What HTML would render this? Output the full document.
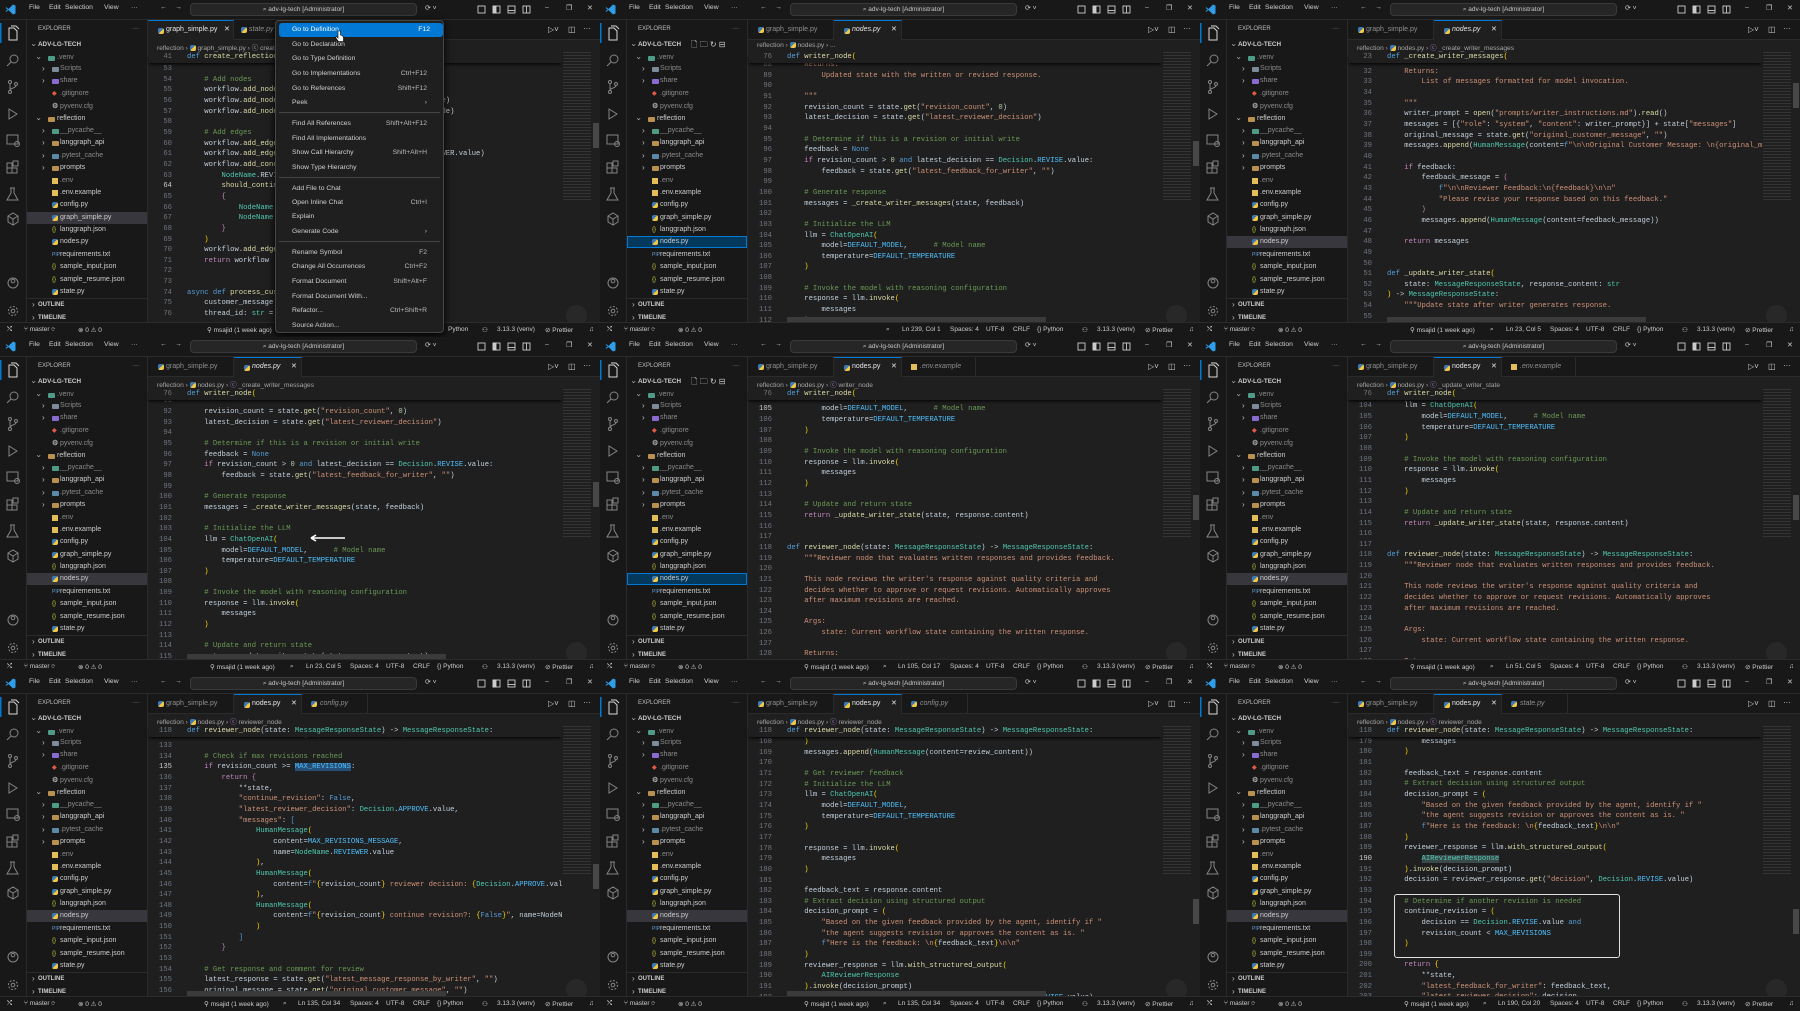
<!DOCTYPE html>
<html><head><meta charset="utf-8"><style>
*{box-sizing:border-box}
body{margin:0;width:1800px;height:1011px;background:#111;overflow:hidden;font-family:"Liberation Sans",sans-serif;color:#ccc}
.p{position:absolute;width:600px;height:337px;overflow:hidden;background:#1f1f1f}
.a{position:absolute;white-space:nowrap}
.tb{position:absolute;left:0;top:0;width:600px;height:20px;background:#181818;border-bottom:1px solid #2b2b2b}
.mn{position:absolute;top:4px;font-size:6.8px;color:#cfcfcf}
.srch{position:absolute;left:190px;top:3px;width:227px;height:13px;background:#262626;border:1px solid #3a3a3a;border-radius:4px;font-size:6.5px;color:#c8c8c8;text-align:center;line-height:11px}
.ab{position:absolute;left:0;top:20px;width:27px;height:302px;background:#181818;border-right:1px solid #2b2b2b}
.sb{position:absolute;left:27px;top:20px;width:121px;height:302px;background:#181818;border-right:1px solid #2b2b2b}
.r{position:absolute;left:0;width:120px;height:12px;line-height:12px;font-size:7px;color:#cccccc;white-space:nowrap}
.r .cv{position:absolute;left:15px;top:0;font-size:8px;color:#bbb;font-weight:normal}
.r .dn{display:inline-block;transform:rotate(90deg)}
.r .ic{position:absolute;left:25px;top:3px}
.r .t{position:absolute;left:33px}
.r.z .cv{left:10px}.r.z .ic{left:21px}.r.z .t{left:30px}
.g{color:#8b8b8b}
.py{width:6px;height:6px;background:linear-gradient(135deg,#3d7ab3 50%,#f2c744 50%);border-radius:2px}
.fo{width:7px;height:5px;background:#b8904f;border-radius:1px;top:4px!important}
.fv{width:7px;height:5px;background:#4f9c86;border-radius:1px;top:4px!important}
.fs{width:7px;height:5px;background:#8a6bd0;border-radius:1px;top:4px!important}
.jn{font-size:6px;color:#cbcb41;top:0!important;font-style:normal}
.ev{width:6px;height:6px;background:#e3bd57}
.sel{background:#37373d}
.self{background:#04395e;outline:1px solid #0078d4;outline-offset:-1px}
.tabs{position:absolute;left:148px;top:20px;width:452px;height:20px;background:#181818;border-bottom:1px solid #2b2b2b}
.tab{position:absolute;top:0;height:20px;font-size:7px;line-height:20px;color:#8f8f8f;border-right:1px solid #2b2b2b}
.tab.on{background:#1f1f1f;color:#e6e6e6;border-top:1px solid #0078d4;line-height:18px}
.tab .py{position:absolute;top:7px}
.bc{position:absolute;left:157px;top:42px;font-size:6.6px;color:#a5a5a5}
.ed{position:absolute;left:148px;top:63px;width:414px;height:259px;overflow:hidden;font:7.2px/10.67px "Liberation Mono",monospace;color:#c3d0dc}
.in{position:absolute;left:0;width:100%}
.l{height:10.67px;white-space:pre;padding-left:39px;position:relative}
.l i{position:absolute;left:0;width:24px;text-align:right;font-style:normal;color:#6e7681}
.l i.cur{color:#cccccc}
.sk{position:absolute;left:148px;top:52px;width:414px;height:11px;background:#1f1f1f;font:7.2px/10.67px "Liberation Mono",monospace;color:#c3d0dc;box-shadow:0 2px 3px -1px #000}
.k{color:#569cd6}.c{color:#c586c0}.s{color:#ce9178}.m{color:#6a9955}.f{color:#dcdcaa}.t2{color:#4ec9b0}.v{color:#9cdcfe}.n{color:#4fc1ff}.y{color:#ffd700}.d{color:#b5cea8}
.hl{background:#264f78}
.mm{position:absolute;left:563px;top:52px;width:28px;height:150px;background:repeating-linear-gradient(#6a6a6a 0 1px,transparent 1px 3px);opacity:.28}
.vs{position:absolute;left:593px;width:6px;height:25px;background:#474747}
.hs{position:absolute;left:187px;top:317px;width:259px;height:5px;background:#3b3b3b}
.fb{position:absolute;left:566px;top:305px;width:21px;height:21px;border-radius:50%;background:#2a2a2a;opacity:.8}
.st{position:absolute;left:0;top:322px;width:600px;height:15px;background:#181818;border-top:1px solid #2b2b2b;font-size:6.5px;color:#cccccc}
.st .a{top:3px}
.menu{position:absolute;left:275px;top:20px;width:169px;height:313px;background:#1f1f1f;border:1px solid #454545;border-radius:4px;box-shadow:0 2px 8px #000;font-size:6.8px;color:#d0d0d0}
.mi{position:absolute;left:0;width:100%;height:14px;line-height:14px}
.mi span{position:absolute;left:16px}
.mi em{position:absolute;right:16px;font-style:normal;color:#bbb}
.sep{position:absolute;left:3px;right:3px;height:1px;background:#454545}
</style></head><body>

<!-- ============ PANEL 1 ============ -->
<div class="p" style="left:0;top:0">
<div class="tb">
<svg class="a" style="left:5px;top:4px" width="11" height="11" viewBox="0 0 11 11"><path d="M8 0.5L3.5 5 1.5 3.3 0.5 4 2.8 5.5 0.5 7 1.5 7.7 3.5 6 8 10.5 10.5 9.5V1.5z" fill="#2f9ee8"/></svg>
<span class="mn" style="left:29px">File</span><span class="mn" style="left:49px">Edit</span><span class="mn" style="left:65px">Selection</span><span class="mn" style="left:104px">View</span><span class="mn" style="left:131px">···</span>
<span class="mn" style="left:160px">←</span><span class="mn" style="left:175px">→</span>
<div class="srch">⌕ adv-lg-tech [Administrator]</div>
<span class="mn" style="left:425px">⟳ ˅</span>
<svg class="a" style="left:477px;top:5px" width="60" height="10" fill="none" stroke="#ccc" stroke-width=".9"><rect x="1" y="1" width="7" height="7"/><rect x="16" y="1" width="7" height="7"/><rect x="16" y="1" width="3" height="7" fill="#ccc"/><rect x="31" y="1" width="7" height="7"/><path d="M31 5.5h7"/><rect x="46" y="1" width="7" height="7"/><path d="M49.5 1v7"/></svg>
<span class="mn" style="left:545px">–</span><span class="mn" style="left:566px">❐</span><span class="mn" style="left:587px">✕</span>
</div>
<div class="ab"><svg width="26" height="302" fill="none" stroke="#858585" stroke-width="1"><rect x="0" y="3" width="1.5" height="20" fill="#0078d4" stroke="none"/><path d="M9 8h5l3 3v9h-8z M11 6h5l3 3" stroke="#d7d7d7"/><circle cx="14" cy="39" r="4"/><path d="M11 42l-4 4"/><circle cx="10" cy="62" r="1.5"/><circle cx="10" cy="72" r="1.5"/><circle cx="16" cy="64" r="1.5"/><path d="M10 63.5v7M16 65.5c0 3-6 2-6 5"/><path d="M9 89l8 5-8 5z"/><rect x="7" y="115" width="11" height="9"/><circle cx="17" cy="124" r="2.5"/><path d="M7 143h5v5h-5zM7 148h5v5h-5zM12 148h5v5h-5zM13 141h5v5h-5z"/><path d="M10 168h5M11 168v5l-4 7h11l-4-7v-5"/><path d="M8 196l5-3 5 3v6l-5 3-5-3zM8 196l5 3 5-3M13 199v6"/><circle cx="13" cy="263" r="5"/><circle cx="13" cy="261" r="1.8"/><circle cx="13" cy="291" r="4.5" stroke-dasharray="2 1.5"/><circle cx="13" cy="291" r="1.8"/></svg></div>
<div class="sb">
<div class="r" style="top:3px;font-size:6px;color:#bbb"><span style="position:absolute;left:11px">EXPLORER</span><span style="position:absolute;left:106px">···</span></div>
<div class="r" style="top:19px;font-weight:bold;font-size:6.3px"><b class="cv" style="left:5px"><span class="dn">›</span></b><span style="position:absolute;left:11px">ADV-LG-TECH</span></div>
<div class="r z" style="top:32px"><b class="cv"><span class="dn">›</span></b><u class="a ic fv"></u><span class="t g">.venv</span></div>
<div class="r" style="top:43px"><b class="cv">›</b><u class="a ic fo" style="background:#7d8a99"></u><span class="t g">Scripts</span></div>
<div class="r" style="top:55px"><b class="cv">›</b><u class="a ic fs"></u><span class="t g">share</span></div>
<div class="r" style="top:68px"><b class="a ic" style="color:#e05a45;font-size:6px;top:0">◆</b><span class="t g">.gitignore</span></div>
<div class="r" style="top:81px"><b class="a ic" style="color:#aaa;font-size:7px;top:0">⚙</b><span class="t g">pyvenv.cfg</span></div>
<div class="r z" style="top:93px"><b class="cv"><span class="dn">›</span></b><u class="a ic fo"></u><span class="t">reflection</span></div>
<div class="r" style="top:105px"><b class="cv">›</b><u class="a ic fv"></u><span class="t g">__pycache__</span></div>
<div class="r" style="top:117px"><b class="cv">›</b><u class="a ic fo"></u><span class="t">langgraph_api</span></div>
<div class="r" style="top:130px"><b class="cv">›</b><u class="a ic fo" style="background:#5c8aa6"></u><span class="t g">.pytest_cache</span></div>
<div class="r" style="top:142px"><b class="cv">›</b><u class="a ic fo"></u><span class="t">prompts</span></div>
<div class="r" style="top:155px"><u class="a ic ev"></u><span class="t g">.env</span></div>
<div class="r" style="top:167px"><u class="a ic ev"></u><span class="t">.env.example</span></div>
<div class="r" style="top:179px"><u class="a ic py"></u><span class="t">config.py</span></div>
<div class="r sel" style="top:192px"><u class="a ic py"></u><span class="t">graph_simple.py</span></div>
<div class="r" style="top:204px"><i class="a ic jn">{}</i><span class="t">langgraph.json</span></div>
<div class="r" style="top:216px"><u class="a ic py"></u><span class="t">nodes.py</span></div>
<div class="r" style="top:229px"><i class="a ic" style="font-size:5px;color:#6aa0d8;top:0;font-style:normal">PIP</i><span class="t">requirements.txt</span></div>
<div class="r" style="top:241px"><i class="a ic jn">{}</i><span class="t">sample_input.json</span></div>
<div class="r" style="top:254px"><i class="a ic jn">{}</i><span class="t">sample_resume.json</span></div>
<div class="r" style="top:266px"><u class="a ic py"></u><span class="t">state.py</span></div>
<div class="a" style="left:0;top:278px;width:120px;height:1px;background:#2b2b2b"></div>
<div class="r" style="top:279px;font-weight:bold;font-size:6px"><b class="cv" style="left:5px">›</b><span style="position:absolute;left:11px">OUTLINE</span></div>
<div class="r" style="top:292px;font-weight:bold;font-size:6px"><b class="cv" style="left:5px">›</b><span style="position:absolute;left:11px">TIMELINE</span></div>
</div>
<div class="tabs">
<div class="tab on" style="left:0;width:86px"><u class="py" style="left:10px"></u><span class="a" style="left:18px">graph_simple.py</span><span class="a" style="left:76px">✕</span></div>
<div class="tab" style="left:86px;width:60px"><u class="py" style="left:7px"></u><span class="a" style="left:15px;font-style:italic">state.py</span></div>
<span class="a" style="left:400px;top:5px;font-size:8px">▷˅</span><span class="a" style="left:420px;top:5px;font-size:8px">◫</span><span class="a" style="left:435px;top:4px;font-size:8px">···</span>
</div>
<div class="bc">reflection › <u class="py" style="display:inline-block;vertical-align:middle"></u> graph_simple.py › ⓒ create_reflection_workflow</div>
<div class="ed"><div class="in" style="top:1px">
<div class="l"><i>53</i></div>
<div class="l"><i>54</i>    <span class="m"># Add nodes</span></div>
<div class="l"><i>55</i>    workflow.<span class="f">add_node</span>(NodeName.WRITER.value, writer_node)</div>
<div class="l"><i>56</i>    workflow.<span class="f">add_node</span>(NodeName.REVIEWER.value, reviewer_node)</div>
<div class="l"><i>57</i>    workflow.<span class="f">add_node</span>(NodeName.HUMAN.value, human_review_node)</div>
<div class="l"><i>58</i></div>
<div class="l"><i>59</i>    <span class="m"># Add edges</span></div>
<div class="l"><i>60</i>    workflow.<span class="f">add_edge</span>(START, NodeName.WRITER.value)</div>
<div class="l"><i>61</i>    workflow.<span class="f">add_edge</span>(NodeName.WRITER.value, NodeName.REVIEWER.value)</div>
<div class="l"><i>62</i>    workflow.<span class="f">add_conditional_edges</span>(</div>
<div class="l"><i>63</i>        <span class="t2">NodeName</span>.REVIEWER.value,</div>
<div class="l"><i class="cur">64</i>        <span class="f">should_continue</span>,</div>
<div class="l"><i>65</i>        <span class="c">{</span></div>
<div class="l"><i>66</i>            <span class="t2">NodeName</span>.WRITER.value: NodeName.WRITER.value,</div>
<div class="l"><i>67</i>            <span class="t2">NodeName</span>.END.value: NodeName.END.value</div>
<div class="l"><i>68</i>        <span class="c">}</span></div>
<div class="l"><i>69</i>    <span class="y">)</span></div>
<div class="l"><i>70</i>    workflow.<span class="f">add_edge</span>(NodeName.HUMAN.value, END)</div>
<div class="l"><i>71</i>    <span class="c">return</span> workflow</div>
<div class="l"><i>72</i></div>
<div class="l"><i>73</i></div>
<div class="l"><i>74</i><span class="k">async def</span> <span class="f">process_customer_message</span>(</div>
<div class="l"><i>75</i>    customer_message: <span class="t2">str</span>,</div>
<div class="l"><i>76</i>    thread_id: <span class="t2">str</span> = <span class="k">None</span>,</div>
</div></div>
<div class="sk"><div class="l"><i>41</i><span class="k">def</span> <span class="f">create_reflection_workflow</span>() -&gt; <span class="t2">StateGraph</span>:</div></div>
<div class="mm"></div><div class="vs" style="top:123px"></div><div class="fb"></div>
<div class="st"><span class="a" style="left:7px">⤭</span><span class="a" style="left:24px">⑂ master ⟳</span><span class="a" style="left:78px">⊗ 0 ⚠ 0</span><span class="a" style="left:207px">⚲ msajid (1 week ago)</span><span class="a" style="left:448px">Python</span><span class="a" style="left:482px">⚇</span><span class="a" style="left:497px">3.13.3 (venv)</span><span class="a" style="left:545px">⊘ Prettier</span><span class="a" style="left:589px">♫</span></div>
<div class="menu">
<div class="mi" style="top:2px;left:3px;width:164px;background:#0078d4;border-radius:3px;color:#fff"><span style="left:13px">Go to Definition</span><em style="right:13px;color:#fff">F12</em></div>
<div class="mi" style="top:17px"><span>Go to Declaration</span></div>
<div class="mi" style="top:31px"><span>Go to Type Definition</span></div>
<div class="mi" style="top:46px"><span>Go to Implementations</span><em>Ctrl+F12</em></div>
<div class="mi" style="top:61px"><span>Go to References</span><em>Shift+F12</em></div>
<div class="mi" style="top:75px"><span>Peek</span><em>›</em></div>
<div class="sep" style="top:91px"></div>
<div class="mi" style="top:96px"><span>Find All References</span><em>Shift+Alt+F12</em></div>
<div class="mi" style="top:111px"><span>Find All Implementations</span></div>
<div class="mi" style="top:125px"><span>Show Call Hierarchy</span><em>Shift+Alt+H</em></div>
<div class="mi" style="top:140px"><span>Show Type Hierarchy</span></div>
<div class="sep" style="top:156px"></div>
<div class="mi" style="top:161px"><span>Add File to Chat</span></div>
<div class="mi" style="top:175px"><span>Open Inline Chat</span><em>Ctrl+I</em></div>
<div class="mi" style="top:189px"><span>Explain</span></div>
<div class="mi" style="top:204px"><span>Generate Code</span><em>›</em></div>
<div class="sep" style="top:220px"></div>
<div class="mi" style="top:225px"><span>Rename Symbol</span><em>F2</em></div>
<div class="mi" style="top:239px"><span>Change All Occurrences</span><em>Ctrl+F2</em></div>
<div class="mi" style="top:254px"><span>Format Document</span><em>Shift+Alt+F</em></div>
<div class="mi" style="top:269px"><span>Format Document With...</span></div>
<div class="mi" style="top:283px"><span>Refactor...</span><em>Ctrl+Shift+R</em></div>
<div class="mi" style="top:298px"><span>Source Action...</span></div>
</div>
<svg class="a" style="left:335px;top:30px" width="10" height="14"><path d="M3 1v7l-1.5-1.5-1 1 3 4h5v-4l-1-2-2-.5V1z" fill="#fff" stroke="#000" stroke-width=".6"/></svg>
</div>

<!-- ============ PANEL 2 ============ -->
<div class="p" style="left:600px;top:0">
<div class="tb">
<svg class="a" style="left:5px;top:4px" width="11" height="11" viewBox="0 0 11 11"><path d="M8 0.5L3.5 5 1.5 3.3 0.5 4 2.8 5.5 0.5 7 1.5 7.7 3.5 6 8 10.5 10.5 9.5V1.5z" fill="#2f9ee8"/></svg>
<span class="mn" style="left:29px">File</span><span class="mn" style="left:49px">Edit</span><span class="mn" style="left:65px">Selection</span><span class="mn" style="left:104px">View</span><span class="mn" style="left:131px">···</span>
<span class="mn" style="left:160px">←</span><span class="mn" style="left:175px">→</span>
<div class="srch">⌕ adv-lg-tech [Administrator]</div>
<span class="mn" style="left:425px">⟳ ˅</span>
<svg class="a" style="left:477px;top:5px" width="60" height="10" fill="none" stroke="#ccc" stroke-width=".9"><rect x="1" y="1" width="7" height="7"/><rect x="16" y="1" width="7" height="7"/><rect x="16" y="1" width="3" height="7" fill="#ccc"/><rect x="31" y="1" width="7" height="7"/><path d="M31 5.5h7"/><rect x="46" y="1" width="7" height="7"/><path d="M49.5 1v7"/></svg>
<span class="mn" style="left:545px">–</span><span class="mn" style="left:566px">❐</span><span class="mn" style="left:587px">✕</span>
</div>
<div class="ab"><svg width="26" height="302" fill="none" stroke="#858585" stroke-width="1"><rect x="0" y="3" width="1.5" height="20" fill="#0078d4" stroke="none"/><path d="M9 8h5l3 3v9h-8z M11 6h5l3 3" stroke="#d7d7d7"/><circle cx="14" cy="39" r="4"/><path d="M11 42l-4 4"/><circle cx="10" cy="62" r="1.5"/><circle cx="10" cy="72" r="1.5"/><circle cx="16" cy="64" r="1.5"/><path d="M10 63.5v7M16 65.5c0 3-6 2-6 5"/><path d="M9 89l8 5-8 5z"/><rect x="7" y="115" width="11" height="9"/><circle cx="17" cy="124" r="2.5"/><path d="M7 143h5v5h-5zM7 148h5v5h-5zM12 148h5v5h-5zM13 141h5v5h-5z"/><path d="M10 168h5M11 168v5l-4 7h11l-4-7v-5"/><path d="M8 196l5-3 5 3v6l-5 3-5-3zM8 196l5 3 5-3M13 199v6"/><circle cx="13" cy="263" r="5"/><circle cx="13" cy="261" r="1.8"/><circle cx="13" cy="291" r="4.5" stroke-dasharray="2 1.5"/><circle cx="13" cy="291" r="1.8"/></svg></div>
<div class="sb">
<div class="r" style="top:3px;font-size:6px;color:#bbb"><span style="position:absolute;left:11px">EXPLORER</span><span style="position:absolute;left:106px">···</span></div>
<div class="r" style="top:19px;font-weight:bold;font-size:6.3px"><b class="cv" style="left:5px"><span class="dn">›</span></b><span style="position:absolute;left:11px">ADV-LG-TECH</span><span style="position:absolute;left:64px;font-weight:normal;font-size:8px">🗋 🗀 ↻ ⊟</span></div>
<div class="r z" style="top:32px"><b class="cv"><span class="dn">›</span></b><u class="a ic fv"></u><span class="t g">.venv</span></div>
<div class="r" style="top:43px"><b class="cv">›</b><u class="a ic fo" style="background:#7d8a99"></u><span class="t g">Scripts</span></div>
<div class="r" style="top:55px"><b class="cv">›</b><u class="a ic fs"></u><span class="t g">share</span></div>
<div class="r" style="top:68px"><b class="a ic" style="color:#e05a45;font-size:6px;top:0">◆</b><span class="t g">.gitignore</span></div>
<div class="r" style="top:81px"><b class="a ic" style="color:#aaa;font-size:7px;top:0">⚙</b><span class="t g">pyvenv.cfg</span></div>
<div class="r z" style="top:93px"><b class="cv"><span class="dn">›</span></b><u class="a ic fo"></u><span class="t">reflection</span></div>
<div class="r" style="top:105px"><b class="cv">›</b><u class="a ic fv"></u><span class="t g">__pycache__</span></div>
<div class="r" style="top:117px"><b class="cv">›</b><u class="a ic fo"></u><span class="t">langgraph_api</span></div>
<div class="r" style="top:130px"><b class="cv">›</b><u class="a ic fo" style="background:#5c8aa6"></u><span class="t g">.pytest_cache</span></div>
<div class="r" style="top:142px"><b class="cv">›</b><u class="a ic fo"></u><span class="t">prompts</span></div>
<div class="r" style="top:155px"><u class="a ic ev"></u><span class="t g">.env</span></div>
<div class="r" style="top:167px"><u class="a ic ev"></u><span class="t">.env.example</span></div>
<div class="r" style="top:179px"><u class="a ic py"></u><span class="t">config.py</span></div>
<div class="r" style="top:192px"><u class="a ic py"></u><span class="t">graph_simple.py</span></div>
<div class="r" style="top:204px"><i class="a ic jn">{}</i><span class="t">langgraph.json</span></div>
<div class="r self" style="top:216px"><u class="a ic py"></u><span class="t">nodes.py</span></div>
<div class="r" style="top:229px"><i class="a ic" style="font-size:5px;color:#6aa0d8;top:0;font-style:normal">PIP</i><span class="t">requirements.txt</span></div>
<div class="r" style="top:241px"><i class="a ic jn">{}</i><span class="t">sample_input.json</span></div>
<div class="r" style="top:254px"><i class="a ic jn">{}</i><span class="t">sample_resume.json</span></div>
<div class="r" style="top:266px"><u class="a ic py"></u><span class="t">state.py</span></div>
<div class="a" style="left:0;top:278px;width:120px;height:1px;background:#2b2b2b"></div>
<div class="r" style="top:279px;font-weight:bold;font-size:6px"><b class="cv" style="left:5px">›</b><span style="position:absolute;left:11px">OUTLINE</span></div>
<div class="r" style="top:292px;font-weight:bold;font-size:6px"><b class="cv" style="left:5px">›</b><span style="position:absolute;left:11px">TIMELINE</span></div>
</div>
<div class="tabs">
<div class="tab" style="left:0;width:86px"><u class="py" style="left:10px"></u><span class="a" style="left:18px">graph_simple.py</span></div>
<div class="tab on" style="left:86px;width:68px"><u class="py" style="left:10px"></u><span class="a" style="left:18px;font-style:italic">nodes.py</span><span class="a" style="left:57px">✕</span></div>
<span class="a" style="left:400px;top:5px;font-size:8px">▷˅</span><span class="a" style="left:420px;top:5px;font-size:8px">◫</span><span class="a" style="left:435px;top:4px;font-size:8px">···</span>
</div>
<div class="bc">reflection › <u class="py" style="display:inline-block;vertical-align:middle"></u> nodes.py › ...</div>
<div class="ed"><div class="in" style="top:-3px">
<div class="l"><i>88</i><span class="s">    Returns:</span></div>
<div class="l"><i>89</i><span class="s">        Updated state with the written or revised response.</span></div>
<div class="l"><i>90</i></div>
<div class="l"><i>91</i><span class="s">    """</span></div>
<div class="l"><i>92</i>    revision_count = state.<span class="f">get</span>(<span class="s">"revision_count"</span>, <span class="d">0</span>)</div>
<div class="l"><i>93</i>    latest_decision = state.<span class="f">get</span>(<span class="s">"latest_reviewer_decision"</span>)</div>
<div class="l"><i>94</i></div>
<div class="l"><i>95</i>    <span class="m"># Determine if this is a revision or initial write</span></div>
<div class="l"><i>96</i>    feedback = <span class="k">None</span></div>
<div class="l"><i>97</i>    <span class="c">if</span> revision_count &gt; <span class="d">0</span> <span class="k">and</span> latest_decision == <span class="t2">Decision</span>.<span class="n">REVISE</span>.value:</div>
<div class="l"><i>98</i>        feedback = state.<span class="f">get</span>(<span class="s">"latest_feedback_for_writer"</span>, <span class="s">""</span>)</div>
<div class="l"><i>99</i></div>
<div class="l"><i>100</i>    <span class="m"># Generate response</span></div>
<div class="l"><i>101</i>    messages = <span class="f">_create_writer_messages</span>(state, feedback)</div>
<div class="l"><i>102</i></div>
<div class="l"><i>103</i>    <span class="m"># Initialize the LLM</span></div>
<div class="l"><i>104</i>    llm = <span class="t2">ChatOpenAI</span><span class="y">(</span></div>
<div class="l"><i>105</i>        model=<span class="n">DEFAULT_MODEL</span>,      <span class="m"># Model name</span></div>
<div class="l"><i>106</i>        temperature=<span class="n">DEFAULT_TEMPERATURE</span></div>
<div class="l"><i>107</i>    <span class="y">)</span></div>
<div class="l"><i>108</i></div>
<div class="l"><i>109</i>    <span class="m"># Invoke the model with reasoning configuration</span></div>
<div class="l"><i>110</i>    response = llm.<span class="f">invoke</span><span class="y">(</span></div>
<div class="l"><i>111</i>        messages</div>
<div class="l"><i>112</i>    <span class="y">)</span></div>
</div></div>
<div class="sk"><div class="l"><i>76</i><span class="k">def</span> <span class="f">writer_node</span><span class="y">(</span></div></div>
<div class="mm"></div><div class="vs" style="top:141px"></div><div class="hs"></div><div class="fb"></div>
<div class="st"><span class="a" style="left:7px">⤭</span><span class="a" style="left:24px">⑂ master ⟳</span><span class="a" style="left:78px">⊗ 0 ⚠ 0</span><span class="a" style="left:286px">⌕</span><span class="a" style="left:302px">Ln 239, Col 1</span><span class="a" style="left:350px">Spaces: 4</span><span class="a" style="left:386px">UTF-8</span><span class="a" style="left:413px">CRLF</span><span class="a" style="left:437px">{} Python</span><span class="a" style="left:482px">⚇</span><span class="a" style="left:497px">3.13.3 (venv)</span><span class="a" style="left:545px">⊘ Prettier</span><span class="a" style="left:589px">♫</span></div>
</div>

<!-- ============ PANEL 3 ============ -->
<div class="p" style="left:1200px;top:0">
<div class="tb">
<svg class="a" style="left:5px;top:4px" width="11" height="11" viewBox="0 0 11 11"><path d="M8 0.5L3.5 5 1.5 3.3 0.5 4 2.8 5.5 0.5 7 1.5 7.7 3.5 6 8 10.5 10.5 9.5V1.5z" fill="#2f9ee8"/></svg>
<span class="mn" style="left:29px">File</span><span class="mn" style="left:49px">Edit</span><span class="mn" style="left:65px">Selection</span><span class="mn" style="left:104px">View</span><span class="mn" style="left:131px">···</span>
<span class="mn" style="left:160px">←</span><span class="mn" style="left:175px">→</span>
<div class="srch">⌕ adv-lg-tech [Administrator]</div>
<span class="mn" style="left:425px">⟳ ˅</span>
<svg class="a" style="left:477px;top:5px" width="60" height="10" fill="none" stroke="#ccc" stroke-width=".9"><rect x="1" y="1" width="7" height="7"/><rect x="16" y="1" width="7" height="7"/><rect x="16" y="1" width="3" height="7" fill="#ccc"/><rect x="31" y="1" width="7" height="7"/><path d="M31 5.5h7"/><rect x="46" y="1" width="7" height="7"/><path d="M49.5 1v7"/></svg>
<span class="mn" style="left:545px">–</span><span class="mn" style="left:566px">❐</span><span class="mn" style="left:587px">✕</span>
</div>
<div class="ab"><svg width="26" height="302" fill="none" stroke="#858585" stroke-width="1"><rect x="0" y="3" width="1.5" height="20" fill="#0078d4" stroke="none"/><path d="M9 8h5l3 3v9h-8z M11 6h5l3 3" stroke="#d7d7d7"/><circle cx="14" cy="39" r="4"/><path d="M11 42l-4 4"/><circle cx="10" cy="62" r="1.5"/><circle cx="10" cy="72" r="1.5"/><circle cx="16" cy="64" r="1.5"/><path d="M10 63.5v7M16 65.5c0 3-6 2-6 5"/><path d="M9 89l8 5-8 5z"/><rect x="7" y="115" width="11" height="9"/><circle cx="17" cy="124" r="2.5"/><path d="M7 143h5v5h-5zM7 148h5v5h-5zM12 148h5v5h-5zM13 141h5v5h-5z"/><path d="M10 168h5M11 168v5l-4 7h11l-4-7v-5"/><path d="M8 196l5-3 5 3v6l-5 3-5-3zM8 196l5 3 5-3M13 199v6"/><circle cx="13" cy="263" r="5"/><circle cx="13" cy="261" r="1.8"/><circle cx="13" cy="291" r="4.5" stroke-dasharray="2 1.5"/><circle cx="13" cy="291" r="1.8"/></svg></div>
<div class="sb">
<div class="r" style="top:3px;font-size:6px;color:#bbb"><span style="position:absolute;left:11px">EXPLORER</span><span style="position:absolute;left:106px">···</span></div>
<div class="r" style="top:19px;font-weight:bold;font-size:6.3px"><b class="cv" style="left:5px"><span class="dn">›</span></b><span style="position:absolute;left:11px">ADV-LG-TECH</span></div>
<div class="r z" style="top:32px"><b class="cv"><span class="dn">›</span></b><u class="a ic fv"></u><span class="t g">.venv</span></div>
<div class="r" style="top:43px"><b class="cv">›</b><u class="a ic fo" style="background:#7d8a99"></u><span class="t g">Scripts</span></div>
<div class="r" style="top:55px"><b class="cv">›</b><u class="a ic fs"></u><span class="t g">share</span></div>
<div class="r" style="top:68px"><b class="a ic" style="color:#e05a45;font-size:6px;top:0">◆</b><span class="t g">.gitignore</span></div>
<div class="r" style="top:81px"><b class="a ic" style="color:#aaa;font-size:7px;top:0">⚙</b><span class="t g">pyvenv.cfg</span></div>
<div class="r z" style="top:93px"><b class="cv"><span class="dn">›</span></b><u class="a ic fo"></u><span class="t">reflection</span></div>
<div class="r" style="top:105px"><b class="cv">›</b><u class="a ic fv"></u><span class="t g">__pycache__</span></div>
<div class="r" style="top:117px"><b class="cv">›</b><u class="a ic fo"></u><span class="t">langgraph_api</span></div>
<div class="r" style="top:130px"><b class="cv">›</b><u class="a ic fo" style="background:#5c8aa6"></u><span class="t g">.pytest_cache</span></div>
<div class="r" style="top:142px"><b class="cv">›</b><u class="a ic fo"></u><span class="t">prompts</span></div>
<div class="r" style="top:155px"><u class="a ic ev"></u><span class="t g">.env</span></div>
<div class="r" style="top:167px"><u class="a ic ev"></u><span class="t">.env.example</span></div>
<div class="r" style="top:179px"><u class="a ic py"></u><span class="t">config.py</span></div>
<div class="r" style="top:192px"><u class="a ic py"></u><span class="t">graph_simple.py</span></div>
<div class="r" style="top:204px"><i class="a ic jn">{}</i><span class="t">langgraph.json</span></div>
<div class="r sel" style="top:216px"><u class="a ic py"></u><span class="t">nodes.py</span></div>
<div class="r" style="top:229px"><i class="a ic" style="font-size:5px;color:#6aa0d8;top:0;font-style:normal">PIP</i><span class="t">requirements.txt</span></div>
<div class="r" style="top:241px"><i class="a ic jn">{}</i><span class="t">sample_input.json</span></div>
<div class="r" style="top:254px"><i class="a ic jn">{}</i><span class="t">sample_resume.json</span></div>
<div class="r" style="top:266px"><u class="a ic py"></u><span class="t">state.py</span></div>
<div class="a" style="left:0;top:278px;width:120px;height:1px;background:#2b2b2b"></div>
<div class="r" style="top:279px;font-weight:bold;font-size:6px"><b class="cv" style="left:5px">›</b><span style="position:absolute;left:11px">OUTLINE</span></div>
<div class="r" style="top:292px;font-weight:bold;font-size:6px"><b class="cv" style="left:5px">›</b><span style="position:absolute;left:11px">TIMELINE</span></div>
</div>
<div class="tabs">
<div class="tab" style="left:0;width:86px"><u class="py" style="left:10px"></u><span class="a" style="left:18px">graph_simple.py</span></div>
<div class="tab on" style="left:86px;width:68px"><u class="py" style="left:10px"></u><span class="a" style="left:18px;font-style:italic">nodes.py</span><span class="a" style="left:57px">✕</span></div>
<span class="a" style="left:400px;top:5px;font-size:8px">▷˅</span><span class="a" style="left:420px;top:5px;font-size:8px">◫</span><span class="a" style="left:435px;top:4px;font-size:8px">···</span>
</div>
<div class="bc">reflection › <u class="py" style="display:inline-block;vertical-align:middle"></u> nodes.py › <span style="color:#b180d7">ⓒ</span> _create_writer_messages</div>
<div class="ed"><div class="in" style="top:3.7px">
<div class="l"><i>32</i><span class="s">    Returns:</span></div>
<div class="l"><i>33</i><span class="s">        List of messages formatted for model invocation.</span></div>
<div class="l"><i>34</i></div>
<div class="l"><i>35</i><span class="s">    """</span></div>
<div class="l"><i>36</i>    writer_prompt = <span class="f">open</span>(<span class="s">"prompts/writer_instructions.md"</span>).<span class="f">read</span>()</div>
<div class="l"><i>37</i>    messages = [{<span class="s">"role"</span>: <span class="s">"system"</span>, <span class="s">"content"</span>: writer_prompt}] + state[<span class="s">"messages"</span>]</div>
<div class="l"><i>38</i>    original_message = state.<span class="f">get</span>(<span class="s">"original_customer_message"</span>, <span class="s">""</span>)</div>
<div class="l"><i>39</i>    messages.<span class="f">append</span>(<span class="t2">HumanMessage</span>(content=<span class="k">f</span><span class="s">"\n\nOriginal Customer Message: \n{original_message}"</span>))</div>
<div class="l"><i>40</i></div>
<div class="l"><i>41</i>    <span class="c">if</span> feedback:</div>
<div class="l"><i>42</i>        feedback_message = <span class="c">(</span></div>
<div class="l"><i>43</i>            <span class="k">f</span><span class="s">"\n\nReviewer Feedback:\n{feedback}\n\n"</span></div>
<div class="l"><i>44</i>            <span class="s">"Please revise your response based on this feedback."</span></div>
<div class="l"><i>45</i>        <span class="c">)</span></div>
<div class="l"><i>46</i>        messages.<span class="f">append</span>(<span class="t2">HumanMessage</span>(content=feedback_message))</div>
<div class="l"><i>47</i></div>
<div class="l"><i>48</i>    <span class="c">return</span> messages</div>
<div class="l"><i>49</i></div>
<div class="l"><i>50</i></div>
<div class="l"><i>51</i><span class="k">def</span> <span class="f">_update_writer_state</span><span class="y">(</span></div>
<div class="l"><i>52</i>    state: <span class="t2">MessageResponseState</span>, response_content: <span class="t2">str</span></div>
<div class="l"><i>53</i><span class="y">)</span> -&gt; <span class="t2">MessageResponseState</span>:</div>
<div class="l"><i>54</i><span class="s">    """Update state after writer generates response.</span></div>
<div class="l"><i>55</i></div>
</div></div>
<div class="sk"><div class="l"><i>23</i><span class="k">def</span> <span class="f">_create_writer_messages</span><span class="y">(</span></div></div>
<div class="mm"></div><div class="vs" style="top:83px"></div><div class="hs"></div><div class="fb"></div>
<div class="st"><span class="a" style="left:7px">⤭</span><span class="a" style="left:24px">⑂ master ⟳</span><span class="a" style="left:78px">⊗ 0 ⚠ 0</span><span class="a" style="left:210px">⚲ msajid (1 week ago)</span><span class="a" style="left:290px">⌕</span><span class="a" style="left:306px">Ln 23, Col 5</span><span class="a" style="left:350px">Spaces: 4</span><span class="a" style="left:386px">UTF-8</span><span class="a" style="left:413px">CRLF</span><span class="a" style="left:437px">{} Python</span><span class="a" style="left:482px">⚇</span><span class="a" style="left:497px">3.13.3 (venv)</span><span class="a" style="left:545px">⊘ Prettier</span><span class="a" style="left:589px">♫</span></div>
</div>

<!-- ============ PANEL 4 ============ -->
<div class="p" style="left:0;top:337px">
<div class="tb">
<svg class="a" style="left:5px;top:4px" width="11" height="11" viewBox="0 0 11 11"><path d="M8 0.5L3.5 5 1.5 3.3 0.5 4 2.8 5.5 0.5 7 1.5 7.7 3.5 6 8 10.5 10.5 9.5V1.5z" fill="#2f9ee8"/></svg>
<span class="mn" style="left:29px">File</span><span class="mn" style="left:49px">Edit</span><span class="mn" style="left:65px">Selection</span><span class="mn" style="left:104px">View</span><span class="mn" style="left:131px">···</span>
<span class="mn" style="left:160px">←</span><span class="mn" style="left:175px">→</span>
<div class="srch">⌕ adv-lg-tech [Administrator]</div>
<span class="mn" style="left:425px">⟳ ˅</span>
<svg class="a" style="left:477px;top:5px" width="60" height="10" fill="none" stroke="#ccc" stroke-width=".9"><rect x="1" y="1" width="7" height="7"/><rect x="16" y="1" width="7" height="7"/><rect x="16" y="1" width="3" height="7" fill="#ccc"/><rect x="31" y="1" width="7" height="7"/><path d="M31 5.5h7"/><rect x="46" y="1" width="7" height="7"/><path d="M49.5 1v7"/></svg>
<span class="mn" style="left:545px">–</span><span class="mn" style="left:566px">❐</span><span class="mn" style="left:587px">✕</span>
</div>
<div class="ab"><svg width="26" height="302" fill="none" stroke="#858585" stroke-width="1"><rect x="0" y="3" width="1.5" height="20" fill="#0078d4" stroke="none"/><path d="M9 8h5l3 3v9h-8z M11 6h5l3 3" stroke="#d7d7d7"/><circle cx="14" cy="39" r="4"/><path d="M11 42l-4 4"/><circle cx="10" cy="62" r="1.5"/><circle cx="10" cy="72" r="1.5"/><circle cx="16" cy="64" r="1.5"/><path d="M10 63.5v7M16 65.5c0 3-6 2-6 5"/><path d="M9 89l8 5-8 5z"/><rect x="7" y="115" width="11" height="9"/><circle cx="17" cy="124" r="2.5"/><path d="M7 143h5v5h-5zM7 148h5v5h-5zM12 148h5v5h-5zM13 141h5v5h-5z"/><path d="M10 168h5M11 168v5l-4 7h11l-4-7v-5"/><path d="M8 196l5-3 5 3v6l-5 3-5-3zM8 196l5 3 5-3M13 199v6"/><circle cx="13" cy="263" r="5"/><circle cx="13" cy="261" r="1.8"/><circle cx="13" cy="291" r="4.5" stroke-dasharray="2 1.5"/><circle cx="13" cy="291" r="1.8"/></svg></div>
<div class="sb">
<div class="r" style="top:3px;font-size:6px;color:#bbb"><span style="position:absolute;left:11px">EXPLORER</span><span style="position:absolute;left:106px">···</span></div>
<div class="r" style="top:19px;font-weight:bold;font-size:6.3px"><b class="cv" style="left:5px"><span class="dn">›</span></b><span style="position:absolute;left:11px">ADV-LG-TECH</span></div>
<div class="r z" style="top:32px"><b class="cv"><span class="dn">›</span></b><u class="a ic fv"></u><span class="t g">.venv</span></div>
<div class="r" style="top:43px"><b class="cv">›</b><u class="a ic fo" style="background:#7d8a99"></u><span class="t g">Scripts</span></div>
<div class="r" style="top:55px"><b class="cv">›</b><u class="a ic fs"></u><span class="t g">share</span></div>
<div class="r" style="top:68px"><b class="a ic" style="color:#e05a45;font-size:6px;top:0">◆</b><span class="t g">.gitignore</span></div>
<div class="r" style="top:81px"><b class="a ic" style="color:#aaa;font-size:7px;top:0">⚙</b><span class="t g">pyvenv.cfg</span></div>
<div class="r z" style="top:93px"><b class="cv"><span class="dn">›</span></b><u class="a ic fo"></u><span class="t">reflection</span></div>
<div class="r" style="top:105px"><b class="cv">›</b><u class="a ic fv"></u><span class="t g">__pycache__</span></div>
<div class="r" style="top:117px"><b class="cv">›</b><u class="a ic fo"></u><span class="t">langgraph_api</span></div>
<div class="r" style="top:130px"><b class="cv">›</b><u class="a ic fo" style="background:#5c8aa6"></u><span class="t g">.pytest_cache</span></div>
<div class="r" style="top:142px"><b class="cv">›</b><u class="a ic fo"></u><span class="t">prompts</span></div>
<div class="r" style="top:155px"><u class="a ic ev"></u><span class="t g">.env</span></div>
<div class="r" style="top:167px"><u class="a ic ev"></u><span class="t">.env.example</span></div>
<div class="r" style="top:179px"><u class="a ic py"></u><span class="t">config.py</span></div>
<div class="r" style="top:192px"><u class="a ic py"></u><span class="t">graph_simple.py</span></div>
<div class="r" style="top:204px"><i class="a ic jn">{}</i><span class="t">langgraph.json</span></div>
<div class="r sel" style="top:216px"><u class="a ic py"></u><span class="t">nodes.py</span></div>
<div class="r" style="top:229px"><i class="a ic" style="font-size:5px;color:#6aa0d8;top:0;font-style:normal">PIP</i><span class="t">requirements.txt</span></div>
<div class="r" style="top:241px"><i class="a ic jn">{}</i><span class="t">sample_input.json</span></div>
<div class="r" style="top:254px"><i class="a ic jn">{}</i><span class="t">sample_resume.json</span></div>
<div class="r" style="top:266px"><u class="a ic py"></u><span class="t">state.py</span></div>
<div class="a" style="left:0;top:278px;width:120px;height:1px;background:#2b2b2b"></div>
<div class="r" style="top:279px;font-weight:bold;font-size:6px"><b class="cv" style="left:5px">›</b><span style="position:absolute;left:11px">OUTLINE</span></div>
<div class="r" style="top:292px;font-weight:bold;font-size:6px"><b class="cv" style="left:5px">›</b><span style="position:absolute;left:11px">TIMELINE</span></div>
</div>
<div class="tabs">
<div class="tab" style="left:0;width:86px"><u class="py" style="left:10px"></u><span class="a" style="left:18px">graph_simple.py</span></div>
<div class="tab on" style="left:86px;width:68px"><u class="py" style="left:10px"></u><span class="a" style="left:18px;font-style:italic">nodes.py</span><span class="a" style="left:57px">✕</span></div>
<span class="a" style="left:400px;top:5px;font-size:8px">▷˅</span><span class="a" style="left:420px;top:5px;font-size:8px">◫</span><span class="a" style="left:435px;top:4px;font-size:8px">···</span>
</div>
<div class="bc">reflection › <u class="py" style="display:inline-block;vertical-align:middle"></u> nodes.py › <span style="color:#b180d7">ⓒ</span> _create_writer_messages</div>
<div class="ed"><div class="in" style="top:-3.7px">
<div class="l"><i>91</i><span class="s">    """</span></div>
<div class="l"><i>92</i>    revision_count = state.<span class="f">get</span>(<span class="s">"revision_count"</span>, <span class="d">0</span>)</div>
<div class="l"><i>93</i>    latest_decision = state.<span class="f">get</span>(<span class="s">"latest_reviewer_decision"</span>)</div>
<div class="l"><i>94</i></div>
<div class="l"><i>95</i>    <span class="m"># Determine if this is a revision or initial write</span></div>
<div class="l"><i>96</i>    feedback = <span class="k">None</span></div>
<div class="l"><i>97</i>    <span class="c">if</span> revision_count &gt; <span class="d">0</span> <span class="k">and</span> latest_decision == <span class="t2">Decision</span>.<span class="n">REVISE</span>.value:</div>
<div class="l"><i>98</i>        feedback = state.<span class="f">get</span>(<span class="s">"latest_feedback_for_writer"</span>, <span class="s">""</span>)</div>
<div class="l"><i>99</i></div>
<div class="l"><i>100</i>    <span class="m"># Generate response</span></div>
<div class="l"><i>101</i>    messages = <span class="f">_create_writer_messages</span>(state, feedback)</div>
<div class="l"><i>102</i></div>
<div class="l"><i>103</i>    <span class="m"># Initialize the LLM</span></div>
<div class="l"><i>104</i>    llm = <span class="t2">ChatOpenAI</span><span class="y">(</span></div>
<div class="l"><i>105</i>        model=<span class="n">DEFAULT_MODEL</span>,      <span class="m"># Model name</span></div>
<div class="l"><i>106</i>        temperature=<span class="n">DEFAULT_TEMPERATURE</span></div>
<div class="l"><i>107</i>    <span class="y">)</span></div>
<div class="l"><i>108</i></div>
<div class="l"><i>109</i>    <span class="m"># Invoke the model with reasoning configuration</span></div>
<div class="l"><i>110</i>    response = llm.<span class="f">invoke</span><span class="y">(</span></div>
<div class="l"><i>111</i>        messages</div>
<div class="l"><i>112</i>    <span class="y">)</span></div>
<div class="l"><i>113</i></div>
<div class="l"><i>114</i>    <span class="m"># Update and return state</span></div>
<div class="l"><i>115</i>    <span class="c">return</span> <span class="f">_update_writer_state</span>(state, response.content)</div>
</div></div>
<div class="sk"><div class="l"><i>76</i><span class="k">def</span> <span class="f">writer_node</span><span class="y">(</span></div></div>
<svg class="a" style="left:309px;top:196px" width="38" height="10"><path d="M2 5h34M2 5l5-3M2 5l5 3" stroke="#fff" stroke-width="1.6" fill="none"/></svg>
<div class="mm"></div><div class="vs" style="top:145px"></div><div class="hs"></div><div class="fb"></div>
<div class="st"><span class="a" style="left:7px">⤭</span><span class="a" style="left:24px">⑂ master ⟳</span><span class="a" style="left:78px">⊗ 0 ⚠ 0</span><span class="a" style="left:210px">⚲ msajid (1 week ago)</span><span class="a" style="left:290px">⌕</span><span class="a" style="left:306px">Ln 23, Col 5</span><span class="a" style="left:350px">Spaces: 4</span><span class="a" style="left:386px">UTF-8</span><span class="a" style="left:413px">CRLF</span><span class="a" style="left:437px">{} Python</span><span class="a" style="left:482px">⚇</span><span class="a" style="left:497px">3.13.3 (venv)</span><span class="a" style="left:545px">⊘ Prettier</span><span class="a" style="left:589px">♫</span></div>
</div>

<!-- ============ PANEL 5 ============ -->
<div class="p" style="left:600px;top:337px">
<div class="tb">
<svg class="a" style="left:5px;top:4px" width="11" height="11" viewBox="0 0 11 11"><path d="M8 0.5L3.5 5 1.5 3.3 0.5 4 2.8 5.5 0.5 7 1.5 7.7 3.5 6 8 10.5 10.5 9.5V1.5z" fill="#2f9ee8"/></svg>
<span class="mn" style="left:29px">File</span><span class="mn" style="left:49px">Edit</span><span class="mn" style="left:65px">Selection</span><span class="mn" style="left:104px">View</span><span class="mn" style="left:131px">···</span>
<span class="mn" style="left:160px">←</span><span class="mn" style="left:175px">→</span>
<div class="srch">⌕ adv-lg-tech [Administrator]</div>
<span class="mn" style="left:425px">⟳ ˅</span>
<svg class="a" style="left:477px;top:5px" width="60" height="10" fill="none" stroke="#ccc" stroke-width=".9"><rect x="1" y="1" width="7" height="7"/><rect x="16" y="1" width="7" height="7"/><rect x="16" y="1" width="3" height="7" fill="#ccc"/><rect x="31" y="1" width="7" height="7"/><path d="M31 5.5h7"/><rect x="46" y="1" width="7" height="7"/><path d="M49.5 1v7"/></svg>
<span class="mn" style="left:545px">–</span><span class="mn" style="left:566px">❐</span><span class="mn" style="left:587px">✕</span>
</div>
<div class="ab"><svg width="26" height="302" fill="none" stroke="#858585" stroke-width="1"><rect x="0" y="3" width="1.5" height="20" fill="#0078d4" stroke="none"/><path d="M9 8h5l3 3v9h-8z M11 6h5l3 3" stroke="#d7d7d7"/><circle cx="14" cy="39" r="4"/><path d="M11 42l-4 4"/><circle cx="10" cy="62" r="1.5"/><circle cx="10" cy="72" r="1.5"/><circle cx="16" cy="64" r="1.5"/><path d="M10 63.5v7M16 65.5c0 3-6 2-6 5"/><path d="M9 89l8 5-8 5z"/><rect x="7" y="115" width="11" height="9"/><circle cx="17" cy="124" r="2.5"/><path d="M7 143h5v5h-5zM7 148h5v5h-5zM12 148h5v5h-5zM13 141h5v5h-5z"/><path d="M10 168h5M11 168v5l-4 7h11l-4-7v-5"/><path d="M8 196l5-3 5 3v6l-5 3-5-3zM8 196l5 3 5-3M13 199v6"/><circle cx="13" cy="263" r="5"/><circle cx="13" cy="261" r="1.8"/><circle cx="13" cy="291" r="4.5" stroke-dasharray="2 1.5"/><circle cx="13" cy="291" r="1.8"/></svg></div>
<div class="sb">
<div class="r" style="top:3px;font-size:6px;color:#bbb"><span style="position:absolute;left:11px">EXPLORER</span><span style="position:absolute;left:106px">···</span></div>
<div class="r" style="top:19px;font-weight:bold;font-size:6.3px"><b class="cv" style="left:5px"><span class="dn">›</span></b><span style="position:absolute;left:11px">ADV-LG-TECH</span><span style="position:absolute;left:64px;font-weight:normal;font-size:8px">🗋 🗀 ↻ ⊟</span></div>
<div class="r z" style="top:32px"><b class="cv"><span class="dn">›</span></b><u class="a ic fv"></u><span class="t g">.venv</span></div>
<div class="r" style="top:43px"><b class="cv">›</b><u class="a ic fo" style="background:#7d8a99"></u><span class="t g">Scripts</span></div>
<div class="r" style="top:55px"><b class="cv">›</b><u class="a ic fs"></u><span class="t g">share</span></div>
<div class="r" style="top:68px"><b class="a ic" style="color:#e05a45;font-size:6px;top:0">◆</b><span class="t g">.gitignore</span></div>
<div class="r" style="top:81px"><b class="a ic" style="color:#aaa;font-size:7px;top:0">⚙</b><span class="t g">pyvenv.cfg</span></div>
<div class="r z" style="top:93px"><b class="cv"><span class="dn">›</span></b><u class="a ic fo"></u><span class="t">reflection</span></div>
<div class="r" style="top:105px"><b class="cv">›</b><u class="a ic fv"></u><span class="t g">__pycache__</span></div>
<div class="r" style="top:117px"><b class="cv">›</b><u class="a ic fo"></u><span class="t">langgraph_api</span></div>
<div class="r" style="top:130px"><b class="cv">›</b><u class="a ic fo" style="background:#5c8aa6"></u><span class="t g">.pytest_cache</span></div>
<div class="r" style="top:142px"><b class="cv">›</b><u class="a ic fo"></u><span class="t">prompts</span></div>
<div class="r" style="top:155px"><u class="a ic ev"></u><span class="t g">.env</span></div>
<div class="r" style="top:167px"><u class="a ic ev"></u><span class="t">.env.example</span></div>
<div class="r" style="top:179px"><u class="a ic py"></u><span class="t">config.py</span></div>
<div class="r" style="top:192px"><u class="a ic py"></u><span class="t">graph_simple.py</span></div>
<div class="r" style="top:204px"><i class="a ic jn">{}</i><span class="t">langgraph.json</span></div>
<div class="r self" style="top:216px"><u class="a ic py"></u><span class="t">nodes.py</span></div>
<div class="r" style="top:229px"><i class="a ic" style="font-size:5px;color:#6aa0d8;top:0;font-style:normal">PIP</i><span class="t">requirements.txt</span></div>
<div class="r" style="top:241px"><i class="a ic jn">{}</i><span class="t">sample_input.json</span></div>
<div class="r" style="top:254px"><i class="a ic jn">{}</i><span class="t">sample_resume.json</span></div>
<div class="r" style="top:266px"><u class="a ic py"></u><span class="t">state.py</span></div>
<div class="a" style="left:0;top:278px;width:120px;height:1px;background:#2b2b2b"></div>
<div class="r" style="top:279px;font-weight:bold;font-size:6px"><b class="cv" style="left:5px">›</b><span style="position:absolute;left:11px">OUTLINE</span></div>
<div class="r" style="top:292px;font-weight:bold;font-size:6px"><b class="cv" style="left:5px">›</b><span style="position:absolute;left:11px">TIMELINE</span></div>
</div>
<div class="tabs">
<div class="tab" style="left:0;width:86px"><u class="py" style="left:10px"></u><span class="a" style="left:18px">graph_simple.py</span></div>
<div class="tab on" style="left:86px;width:68px"><u class="py" style="left:10px"></u><span class="a" style="left:18px">nodes.py</span><span class="a" style="left:57px">✕</span></div>
<div class="tab" style="left:154px;width:74px"><u class="ev" style="position:absolute;left:9px;top:7px"></u><span class="a" style="left:18px;font-style:italic">.env.example</span></div>
<span class="a" style="left:400px;top:5px;font-size:8px">▷˅</span><span class="a" style="left:420px;top:5px;font-size:8px">◫</span><span class="a" style="left:435px;top:4px;font-size:8px">···</span>
</div>
<div class="bc">reflection › <u class="py" style="display:inline-block;vertical-align:middle"></u> nodes.py › <span style="color:#b180d7">ⓒ</span> writer_node</div>
<div class="ed"><div class="in" style="top:-6.3px">
<div class="l"><i>104</i>    llm = <span class="t2">ChatOpenAI</span><span class="y">(</span></div>
<div class="l"><i class="cur">105</i>        model=<span class="n">DEFAULT_MODEL</span>,      <span class="m"># Model name</span></div>
<div class="l"><i>106</i>        temperature=<span class="n">DEFAULT_TEMPERATURE</span></div>
<div class="l"><i>107</i>    <span class="y">)</span></div>
<div class="l"><i>108</i></div>
<div class="l"><i>109</i>    <span class="m"># Invoke the model with reasoning configuration</span></div>
<div class="l"><i>110</i>    response = llm.<span class="f">invoke</span><span class="y">(</span></div>
<div class="l"><i>111</i>        messages</div>
<div class="l"><i>112</i>    <span class="y">)</span></div>
<div class="l"><i>113</i></div>
<div class="l"><i>114</i>    <span class="m"># Update and return state</span></div>
<div class="l"><i>115</i>    <span class="c">return</span> <span class="f">_update_writer_state</span>(state, response.content)</div>
<div class="l"><i>116</i></div>
<div class="l"><i>117</i></div>
<div class="l"><i>118</i><span class="k">def</span> <span class="f">reviewer_node</span>(state: <span class="t2">MessageResponseState</span>) -&gt; <span class="t2">MessageResponseState</span>:</div>
<div class="l"><i>119</i><span class="s">    """Reviewer node that evaluates written responses and provides feedback.</span></div>
<div class="l"><i>120</i></div>
<div class="l"><i>121</i><span class="s">    This node reviews the writer's response against quality criteria and</span></div>
<div class="l"><i>122</i><span class="s">    decides whether to approve or request revisions. Automatically approves</span></div>
<div class="l"><i>123</i><span class="s">    after maximum revisions are reached.</span></div>
<div class="l"><i>124</i></div>
<div class="l"><i>125</i><span class="s">    Args:</span></div>
<div class="l"><i>126</i><span class="s">        state: Current workflow state containing the written response.</span></div>
<div class="l"><i>127</i></div>
<div class="l"><i>128</i><span class="s">    Returns:</span></div>
</div></div>
<div class="sk"><div class="l"><i>76</i><span class="k">def</span> <span class="f">writer_node</span><span class="y">(</span></div></div>
<div class="mm"></div><div class="vs" style="top:158px"></div><div class="fb"></div>
<div class="st"><span class="a" style="left:7px">⤭</span><span class="a" style="left:24px">⑂ master ⟳</span><span class="a" style="left:78px">⊗ 0 ⚠ 0</span><span class="a" style="left:204px">⚲ msajid (1 week ago)</span><span class="a" style="left:283px">⌕</span><span class="a" style="left:298px">Ln 105, Col 17</span><span class="a" style="left:350px">Spaces: 4</span><span class="a" style="left:386px">UTF-8</span><span class="a" style="left:413px">CRLF</span><span class="a" style="left:437px">{} Python</span><span class="a" style="left:482px">⚇</span><span class="a" style="left:497px">3.13.3 (venv)</span><span class="a" style="left:545px">⊘ Prettier</span><span class="a" style="left:589px">♫</span></div>
</div>

<!-- ============ PANEL 6 ============ -->
<div class="p" style="left:1200px;top:337px">
<div class="tb">
<svg class="a" style="left:5px;top:4px" width="11" height="11" viewBox="0 0 11 11"><path d="M8 0.5L3.5 5 1.5 3.3 0.5 4 2.8 5.5 0.5 7 1.5 7.7 3.5 6 8 10.5 10.5 9.5V1.5z" fill="#2f9ee8"/></svg>
<span class="mn" style="left:29px">File</span><span class="mn" style="left:49px">Edit</span><span class="mn" style="left:65px">Selection</span><span class="mn" style="left:104px">View</span><span class="mn" style="left:131px">···</span>
<span class="mn" style="left:160px">←</span><span class="mn" style="left:175px">→</span>
<div class="srch">⌕ adv-lg-tech [Administrator]</div>
<span class="mn" style="left:425px">⟳ ˅</span>
<svg class="a" style="left:477px;top:5px" width="60" height="10" fill="none" stroke="#ccc" stroke-width=".9"><rect x="1" y="1" width="7" height="7"/><rect x="16" y="1" width="7" height="7"/><rect x="16" y="1" width="3" height="7" fill="#ccc"/><rect x="31" y="1" width="7" height="7"/><path d="M31 5.5h7"/><rect x="46" y="1" width="7" height="7"/><path d="M49.5 1v7"/></svg>
<span class="mn" style="left:545px">–</span><span class="mn" style="left:566px">❐</span><span class="mn" style="left:587px">✕</span>
</div>
<div class="ab"><svg width="26" height="302" fill="none" stroke="#858585" stroke-width="1"><rect x="0" y="3" width="1.5" height="20" fill="#0078d4" stroke="none"/><path d="M9 8h5l3 3v9h-8z M11 6h5l3 3" stroke="#d7d7d7"/><circle cx="14" cy="39" r="4"/><path d="M11 42l-4 4"/><circle cx="10" cy="62" r="1.5"/><circle cx="10" cy="72" r="1.5"/><circle cx="16" cy="64" r="1.5"/><path d="M10 63.5v7M16 65.5c0 3-6 2-6 5"/><path d="M9 89l8 5-8 5z"/><rect x="7" y="115" width="11" height="9"/><circle cx="17" cy="124" r="2.5"/><path d="M7 143h5v5h-5zM7 148h5v5h-5zM12 148h5v5h-5zM13 141h5v5h-5z"/><path d="M10 168h5M11 168v5l-4 7h11l-4-7v-5"/><path d="M8 196l5-3 5 3v6l-5 3-5-3zM8 196l5 3 5-3M13 199v6"/><circle cx="13" cy="263" r="5"/><circle cx="13" cy="261" r="1.8"/><circle cx="13" cy="291" r="4.5" stroke-dasharray="2 1.5"/><circle cx="13" cy="291" r="1.8"/></svg></div>
<div class="sb">
<div class="r" style="top:3px;font-size:6px;color:#bbb"><span style="position:absolute;left:11px">EXPLORER</span><span style="position:absolute;left:106px">···</span></div>
<div class="r" style="top:19px;font-weight:bold;font-size:6.3px"><b class="cv" style="left:5px"><span class="dn">›</span></b><span style="position:absolute;left:11px">ADV-LG-TECH</span></div>
<div class="r z" style="top:32px"><b class="cv"><span class="dn">›</span></b><u class="a ic fv"></u><span class="t g">.venv</span></div>
<div class="r" style="top:43px"><b class="cv">›</b><u class="a ic fo" style="background:#7d8a99"></u><span class="t g">Scripts</span></div>
<div class="r" style="top:55px"><b class="cv">›</b><u class="a ic fs"></u><span class="t g">share</span></div>
<div class="r" style="top:68px"><b class="a ic" style="color:#e05a45;font-size:6px;top:0">◆</b><span class="t g">.gitignore</span></div>
<div class="r" style="top:81px"><b class="a ic" style="color:#aaa;font-size:7px;top:0">⚙</b><span class="t g">pyvenv.cfg</span></div>
<div class="r z" style="top:93px"><b class="cv"><span class="dn">›</span></b><u class="a ic fo"></u><span class="t">reflection</span></div>
<div class="r" style="top:105px"><b class="cv">›</b><u class="a ic fv"></u><span class="t g">__pycache__</span></div>
<div class="r" style="top:117px"><b class="cv">›</b><u class="a ic fo"></u><span class="t">langgraph_api</span></div>
<div class="r" style="top:130px"><b class="cv">›</b><u class="a ic fo" style="background:#5c8aa6"></u><span class="t g">.pytest_cache</span></div>
<div class="r" style="top:142px"><b class="cv">›</b><u class="a ic fo"></u><span class="t">prompts</span></div>
<div class="r" style="top:155px"><u class="a ic ev"></u><span class="t g">.env</span></div>
<div class="r" style="top:167px"><u class="a ic ev"></u><span class="t">.env.example</span></div>
<div class="r" style="top:179px"><u class="a ic py"></u><span class="t">config.py</span></div>
<div class="r" style="top:192px"><u class="a ic py"></u><span class="t">graph_simple.py</span></div>
<div class="r" style="top:204px"><i class="a ic jn">{}</i><span class="t">langgraph.json</span></div>
<div class="r sel" style="top:216px"><u class="a ic py"></u><span class="t">nodes.py</span></div>
<div class="r" style="top:229px"><i class="a ic" style="font-size:5px;color:#6aa0d8;top:0;font-style:normal">PIP</i><span class="t">requirements.txt</span></div>
<div class="r" style="top:241px"><i class="a ic jn">{}</i><span class="t">sample_input.json</span></div>
<div class="r" style="top:254px"><i class="a ic jn">{}</i><span class="t">sample_resume.json</span></div>
<div class="r" style="top:266px"><u class="a ic py"></u><span class="t">state.py</span></div>
<div class="a" style="left:0;top:278px;width:120px;height:1px;background:#2b2b2b"></div>
<div class="r" style="top:279px;font-weight:bold;font-size:6px"><b class="cv" style="left:5px">›</b><span style="position:absolute;left:11px">OUTLINE</span></div>
<div class="r" style="top:292px;font-weight:bold;font-size:6px"><b class="cv" style="left:5px">›</b><span style="position:absolute;left:11px">TIMELINE</span></div>
</div>
<div class="tabs">
<div class="tab" style="left:0;width:86px"><u class="py" style="left:10px"></u><span class="a" style="left:18px">graph_simple.py</span></div>
<div class="tab on" style="left:86px;width:68px"><u class="py" style="left:10px"></u><span class="a" style="left:18px">nodes.py</span><span class="a" style="left:57px">✕</span></div>
<div class="tab" style="left:154px;width:74px"><u class="ev" style="position:absolute;left:9px;top:7px"></u><span class="a" style="left:18px;font-style:italic">.env.example</span></div>
<span class="a" style="left:400px;top:5px;font-size:8px">▷˅</span><span class="a" style="left:420px;top:5px;font-size:8px">◫</span><span class="a" style="left:435px;top:4px;font-size:8px">···</span>
</div>
<div class="bc">reflection › <u class="py" style="display:inline-block;vertical-align:middle"></u> nodes.py › <span style="color:#b180d7">ⓒ</span> _update_writer_state</div>
<div class="ed"><div class="in" style="top:1.3px">
<div class="l"><i>104</i>    llm = <span class="t2">ChatOpenAI</span><span class="y">(</span></div>
<div class="l"><i>105</i>        model=<span class="n">DEFAULT_MODEL</span>,      <span class="m"># Model name</span></div>
<div class="l"><i>106</i>        temperature=<span class="n">DEFAULT_TEMPERATURE</span></div>
<div class="l"><i>107</i>    <span class="y">)</span></div>
<div class="l"><i>108</i></div>
<div class="l"><i>109</i>    <span class="m"># Invoke the model with reasoning configuration</span></div>
<div class="l"><i>110</i>    response = llm.<span class="f">invoke</span><span class="y">(</span></div>
<div class="l"><i>111</i>        messages</div>
<div class="l"><i>112</i>    <span class="y">)</span></div>
<div class="l"><i>113</i></div>
<div class="l"><i>114</i>    <span class="m"># Update and return state</span></div>
<div class="l"><i>115</i>    <span class="c">return</span> <span class="f">_update_writer_state</span>(state, response.content)</div>
<div class="l"><i>116</i></div>
<div class="l"><i>117</i></div>
<div class="l"><i>118</i><span class="k">def</span> <span class="f">reviewer_node</span>(state: <span class="t2">MessageResponseState</span>) -&gt; <span class="t2">MessageResponseState</span>:</div>
<div class="l"><i>119</i><span class="s">    """Reviewer node that evaluates written responses and provides feedback.</span></div>
<div class="l"><i>120</i></div>
<div class="l"><i>121</i><span class="s">    This node reviews the writer's response against quality criteria and</span></div>
<div class="l"><i>122</i><span class="s">    decides whether to approve or request revisions. Automatically approves</span></div>
<div class="l"><i>123</i><span class="s">    after maximum revisions are reached.</span></div>
<div class="l"><i>124</i></div>
<div class="l"><i>125</i><span class="s">    Args:</span></div>
<div class="l"><i>126</i><span class="s">        state: Current workflow state containing the written response.</span></div>
<div class="l"><i>127</i></div>
<div class="l"><i>128</i><span class="s">    Returns:</span></div>
</div></div>
<div class="sk"><div class="l"><i>76</i><span class="k">def</span> <span class="f">writer_node</span><span class="y">(</span></div></div>
<div class="mm"></div><div class="vs" style="top:158px"></div><div class="fb"></div>
<div class="st"><span class="a" style="left:7px">⤭</span><span class="a" style="left:24px">⑂ master ⟳</span><span class="a" style="left:78px">⊗ 0 ⚠ 0</span><span class="a" style="left:210px">⚲ msajid (1 week ago)</span><span class="a" style="left:290px">⌕</span><span class="a" style="left:306px">Ln 51, Col 5</span><span class="a" style="left:350px">Spaces: 4</span><span class="a" style="left:386px">UTF-8</span><span class="a" style="left:413px">CRLF</span><span class="a" style="left:437px">{} Python</span><span class="a" style="left:482px">⚇</span><span class="a" style="left:497px">3.13.3 (venv)</span><span class="a" style="left:545px">⊘ Prettier</span><span class="a" style="left:589px">♫</span></div>
</div>

<!-- ============ PANEL 7 ============ -->
<div class="p" style="left:0;top:674px">
<div class="tb">
<svg class="a" style="left:5px;top:4px" width="11" height="11" viewBox="0 0 11 11"><path d="M8 0.5L3.5 5 1.5 3.3 0.5 4 2.8 5.5 0.5 7 1.5 7.7 3.5 6 8 10.5 10.5 9.5V1.5z" fill="#2f9ee8"/></svg>
<span class="mn" style="left:29px">File</span><span class="mn" style="left:49px">Edit</span><span class="mn" style="left:65px">Selection</span><span class="mn" style="left:104px">View</span><span class="mn" style="left:131px">···</span>
<span class="mn" style="left:160px">←</span><span class="mn" style="left:175px">→</span>
<div class="srch">⌕ adv-lg-tech [Administrator]</div>
<span class="mn" style="left:425px">⟳ ˅</span>
<svg class="a" style="left:477px;top:5px" width="60" height="10" fill="none" stroke="#ccc" stroke-width=".9"><rect x="1" y="1" width="7" height="7"/><rect x="16" y="1" width="7" height="7"/><rect x="16" y="1" width="3" height="7" fill="#ccc"/><rect x="31" y="1" width="7" height="7"/><path d="M31 5.5h7"/><rect x="46" y="1" width="7" height="7"/><path d="M49.5 1v7"/></svg>
<span class="mn" style="left:545px">–</span><span class="mn" style="left:566px">❐</span><span class="mn" style="left:587px">✕</span>
</div>
<div class="ab"><svg width="26" height="302" fill="none" stroke="#858585" stroke-width="1"><rect x="0" y="3" width="1.5" height="20" fill="#0078d4" stroke="none"/><path d="M9 8h5l3 3v9h-8z M11 6h5l3 3" stroke="#d7d7d7"/><circle cx="14" cy="39" r="4"/><path d="M11 42l-4 4"/><circle cx="10" cy="62" r="1.5"/><circle cx="10" cy="72" r="1.5"/><circle cx="16" cy="64" r="1.5"/><path d="M10 63.5v7M16 65.5c0 3-6 2-6 5"/><path d="M9 89l8 5-8 5z"/><rect x="7" y="115" width="11" height="9"/><circle cx="17" cy="124" r="2.5"/><path d="M7 143h5v5h-5zM7 148h5v5h-5zM12 148h5v5h-5zM13 141h5v5h-5z"/><path d="M10 168h5M11 168v5l-4 7h11l-4-7v-5"/><path d="M8 196l5-3 5 3v6l-5 3-5-3zM8 196l5 3 5-3M13 199v6"/><circle cx="13" cy="263" r="5"/><circle cx="13" cy="261" r="1.8"/><circle cx="13" cy="291" r="4.5" stroke-dasharray="2 1.5"/><circle cx="13" cy="291" r="1.8"/></svg></div>
<div class="sb">
<div class="r" style="top:3px;font-size:6px;color:#bbb"><span style="position:absolute;left:11px">EXPLORER</span><span style="position:absolute;left:106px">···</span></div>
<div class="r" style="top:19px;font-weight:bold;font-size:6.3px"><b class="cv" style="left:5px"><span class="dn">›</span></b><span style="position:absolute;left:11px">ADV-LG-TECH</span></div>
<div class="r z" style="top:32px"><b class="cv"><span class="dn">›</span></b><u class="a ic fv"></u><span class="t g">.venv</span></div>
<div class="r" style="top:43px"><b class="cv">›</b><u class="a ic fo" style="background:#7d8a99"></u><span class="t g">Scripts</span></div>
<div class="r" style="top:55px"><b class="cv">›</b><u class="a ic fs"></u><span class="t g">share</span></div>
<div class="r" style="top:68px"><b class="a ic" style="color:#e05a45;font-size:6px;top:0">◆</b><span class="t g">.gitignore</span></div>
<div class="r" style="top:81px"><b class="a ic" style="color:#aaa;font-size:7px;top:0">⚙</b><span class="t g">pyvenv.cfg</span></div>
<div class="r z" style="top:93px"><b class="cv"><span class="dn">›</span></b><u class="a ic fo"></u><span class="t">reflection</span></div>
<div class="r" style="top:105px"><b class="cv">›</b><u class="a ic fv"></u><span class="t g">__pycache__</span></div>
<div class="r" style="top:117px"><b class="cv">›</b><u class="a ic fo"></u><span class="t">langgraph_api</span></div>
<div class="r" style="top:130px"><b class="cv">›</b><u class="a ic fo" style="background:#5c8aa6"></u><span class="t g">.pytest_cache</span></div>
<div class="r" style="top:142px"><b class="cv">›</b><u class="a ic fo"></u><span class="t">prompts</span></div>
<div class="r" style="top:155px"><u class="a ic ev"></u><span class="t g">.env</span></div>
<div class="r" style="top:167px"><u class="a ic ev"></u><span class="t">.env.example</span></div>
<div class="r" style="top:179px"><u class="a ic py"></u><span class="t">config.py</span></div>
<div class="r" style="top:192px"><u class="a ic py"></u><span class="t">graph_simple.py</span></div>
<div class="r" style="top:204px"><i class="a ic jn">{}</i><span class="t">langgraph.json</span></div>
<div class="r sel" style="top:216px"><u class="a ic py"></u><span class="t">nodes.py</span></div>
<div class="r" style="top:229px"><i class="a ic" style="font-size:5px;color:#6aa0d8;top:0;font-style:normal">PIP</i><span class="t">requirements.txt</span></div>
<div class="r" style="top:241px"><i class="a ic jn">{}</i><span class="t">sample_input.json</span></div>
<div class="r" style="top:254px"><i class="a ic jn">{}</i><span class="t">sample_resume.json</span></div>
<div class="r" style="top:266px"><u class="a ic py"></u><span class="t">state.py</span></div>
<div class="a" style="left:0;top:278px;width:120px;height:1px;background:#2b2b2b"></div>
<div class="r" style="top:279px;font-weight:bold;font-size:6px"><b class="cv" style="left:5px">›</b><span style="position:absolute;left:11px">OUTLINE</span></div>
<div class="r" style="top:292px;font-weight:bold;font-size:6px"><b class="cv" style="left:5px">›</b><span style="position:absolute;left:11px">TIMELINE</span></div>
</div>
<div class="tabs">
<div class="tab" style="left:0;width:86px"><u class="py" style="left:10px"></u><span class="a" style="left:18px">graph_simple.py</span></div>
<div class="tab on" style="left:86px;width:68px"><u class="py" style="left:10px"></u><span class="a" style="left:18px">nodes.py</span><span class="a" style="left:57px">✕</span></div>
<div class="tab" style="left:154px;width:66px"><u class="py" style="left:9px"></u><span class="a" style="left:18px;font-style:italic">config.py</span></div>
<span class="a" style="left:400px;top:5px;font-size:8px">▷˅</span><span class="a" style="left:420px;top:5px;font-size:8px">◫</span><span class="a" style="left:435px;top:4px;font-size:8px">···</span>
</div>
<div class="bc">reflection › <u class="py" style="display:inline-block;vertical-align:middle"></u> nodes.py › <span style="color:#b180d7">ⓒ</span> reviewer_node</div>
<div class="ed"><div class="in" style="top:-6.7px">
<div class="l"><i>132</i>    revision_count = state.<span class="f">get</span>(<span class="s">"revision_count"</span>, <span class="d">0</span>)</div>
<div class="l"><i>133</i></div>
<div class="l"><i>134</i>    <span class="m"># Check if max revisions reached</span></div>
<div class="l"><i class="cur">135</i>    <span class="c">if</span> revision_count &gt;= <span class="n hl">MAX_REVISIONS</span>:</div>
<div class="l"><i>136</i>        <span class="c">return</span> <span class="c">{</span></div>
<div class="l"><i>137</i>            **state,</div>
<div class="l"><i>138</i>            <span class="s">"continue_revision"</span>: <span class="k">False</span>,</div>
<div class="l"><i>139</i>            <span class="s">"latest_reviewer_decision"</span>: <span class="t2">Decision</span>.<span class="n">APPROVE</span>.value,</div>
<div class="l"><i>140</i>            <span class="s">"messages"</span>: <span class="k">[</span></div>
<div class="l"><i>141</i>                <span class="t2">HumanMessage</span><span class="y">(</span></div>
<div class="l"><i>142</i>                    content=<span class="n">MAX_REVISIONS_MESSAGE</span>,</div>
<div class="l"><i>143</i>                    name=<span class="t2">NodeName</span>.<span class="n">REVIEWER</span>.value</div>
<div class="l"><i>144</i>                <span class="y">)</span>,</div>
<div class="l"><i>145</i>                <span class="t2">HumanMessage</span><span class="y">(</span></div>
<div class="l"><i>146</i>                    content=<span class="k">f</span><span class="s">"</span><span class="y">{</span>revision_count<span class="y">}</span><span class="s"> reviewer decision: </span><span class="y">{</span><span class="t2">Decision</span>.<span class="n">APPROVE</span>.value<span class="y">}</span><span class="s">"</span>,</div>
<div class="l"><i>147</i>                <span class="y">)</span>,</div>
<div class="l"><i>148</i>                <span class="t2">HumanMessage</span><span class="y">(</span></div>
<div class="l"><i>149</i>                    content=<span class="k">f</span><span class="s">"</span><span class="y">{</span>revision_count<span class="y">}</span><span class="s"> continue revision?: </span><span class="y">{</span><span class="k">False</span><span class="y">}</span><span class="s">"</span>, name=NodeName.REVIEWER.value</div>
<div class="l"><i>150</i>                <span class="y">)</span></div>
<div class="l"><i>151</i>            <span class="k">]</span></div>
<div class="l"><i>152</i>        <span class="c">}</span></div>
<div class="l"><i>153</i></div>
<div class="l"><i>154</i>    <span class="m"># Get response and comment for review</span></div>
<div class="l"><i>155</i>    latest_response = state.<span class="f">get</span>(<span class="s">"latest_message_response_by_writer"</span>, <span class="s">""</span>)</div>
<div class="l"><i>156</i>    original_message = state.<span class="f">get</span>(<span class="s">"original_customer_message"</span>, <span class="s">""</span>)</div>
</div></div>
<div class="sk"><div class="l"><i>118</i><span class="k">def</span> <span class="f">reviewer_node</span>(state: <span class="t2">MessageResponseState</span>) -&gt; <span class="t2">MessageResponseState</span>:</div></div>
<div class="mm"></div><div class="vs" style="top:190px"></div><div class="hs"></div><div class="fb"></div>
<div class="st"><span class="a" style="left:7px">⤭</span><span class="a" style="left:24px">⑂ master ⟳</span><span class="a" style="left:78px">⊗ 0 ⚠ 0</span><span class="a" style="left:204px">⚲ msajid (1 week ago)</span><span class="a" style="left:283px">⌕</span><span class="a" style="left:298px">Ln 135, Col 34</span><span class="a" style="left:350px">Spaces: 4</span><span class="a" style="left:386px">UTF-8</span><span class="a" style="left:413px">CRLF</span><span class="a" style="left:437px">{} Python</span><span class="a" style="left:482px">⚇</span><span class="a" style="left:497px">3.13.3 (venv)</span><span class="a" style="left:545px">⊘ Prettier</span><span class="a" style="left:589px">♫</span></div>
</div>

<!-- ============ PANEL 8 ============ -->
<div class="p" style="left:600px;top:674px">
<div class="tb">
<svg class="a" style="left:5px;top:4px" width="11" height="11" viewBox="0 0 11 11"><path d="M8 0.5L3.5 5 1.5 3.3 0.5 4 2.8 5.5 0.5 7 1.5 7.7 3.5 6 8 10.5 10.5 9.5V1.5z" fill="#2f9ee8"/></svg>
<span class="mn" style="left:29px">File</span><span class="mn" style="left:49px">Edit</span><span class="mn" style="left:65px">Selection</span><span class="mn" style="left:104px">View</span><span class="mn" style="left:131px">···</span>
<span class="mn" style="left:160px">←</span><span class="mn" style="left:175px">→</span>
<div class="srch">⌕ adv-lg-tech [Administrator]</div>
<span class="mn" style="left:425px">⟳ ˅</span>
<svg class="a" style="left:477px;top:5px" width="60" height="10" fill="none" stroke="#ccc" stroke-width=".9"><rect x="1" y="1" width="7" height="7"/><rect x="16" y="1" width="7" height="7"/><rect x="16" y="1" width="3" height="7" fill="#ccc"/><rect x="31" y="1" width="7" height="7"/><path d="M31 5.5h7"/><rect x="46" y="1" width="7" height="7"/><path d="M49.5 1v7"/></svg>
<span class="mn" style="left:545px">–</span><span class="mn" style="left:566px">❐</span><span class="mn" style="left:587px">✕</span>
</div>
<div class="ab"><svg width="26" height="302" fill="none" stroke="#858585" stroke-width="1"><rect x="0" y="3" width="1.5" height="20" fill="#0078d4" stroke="none"/><path d="M9 8h5l3 3v9h-8z M11 6h5l3 3" stroke="#d7d7d7"/><circle cx="14" cy="39" r="4"/><path d="M11 42l-4 4"/><circle cx="10" cy="62" r="1.5"/><circle cx="10" cy="72" r="1.5"/><circle cx="16" cy="64" r="1.5"/><path d="M10 63.5v7M16 65.5c0 3-6 2-6 5"/><path d="M9 89l8 5-8 5z"/><rect x="7" y="115" width="11" height="9"/><circle cx="17" cy="124" r="2.5"/><path d="M7 143h5v5h-5zM7 148h5v5h-5zM12 148h5v5h-5zM13 141h5v5h-5z"/><path d="M10 168h5M11 168v5l-4 7h11l-4-7v-5"/><path d="M8 196l5-3 5 3v6l-5 3-5-3zM8 196l5 3 5-3M13 199v6"/><circle cx="13" cy="263" r="5"/><circle cx="13" cy="261" r="1.8"/><circle cx="13" cy="291" r="4.5" stroke-dasharray="2 1.5"/><circle cx="13" cy="291" r="1.8"/></svg></div>
<div class="sb">
<div class="r" style="top:3px;font-size:6px;color:#bbb"><span style="position:absolute;left:11px">EXPLORER</span><span style="position:absolute;left:106px">···</span></div>
<div class="r" style="top:19px;font-weight:bold;font-size:6.3px"><b class="cv" style="left:5px"><span class="dn">›</span></b><span style="position:absolute;left:11px">ADV-LG-TECH</span></div>
<div class="r z" style="top:32px"><b class="cv"><span class="dn">›</span></b><u class="a ic fv"></u><span class="t g">.venv</span></div>
<div class="r" style="top:43px"><b class="cv">›</b><u class="a ic fo" style="background:#7d8a99"></u><span class="t g">Scripts</span></div>
<div class="r" style="top:55px"><b class="cv">›</b><u class="a ic fs"></u><span class="t g">share</span></div>
<div class="r" style="top:68px"><b class="a ic" style="color:#e05a45;font-size:6px;top:0">◆</b><span class="t g">.gitignore</span></div>
<div class="r" style="top:81px"><b class="a ic" style="color:#aaa;font-size:7px;top:0">⚙</b><span class="t g">pyvenv.cfg</span></div>
<div class="r z" style="top:93px"><b class="cv"><span class="dn">›</span></b><u class="a ic fo"></u><span class="t">reflection</span></div>
<div class="r" style="top:105px"><b class="cv">›</b><u class="a ic fv"></u><span class="t g">__pycache__</span></div>
<div class="r" style="top:117px"><b class="cv">›</b><u class="a ic fo"></u><span class="t">langgraph_api</span></div>
<div class="r" style="top:130px"><b class="cv">›</b><u class="a ic fo" style="background:#5c8aa6"></u><span class="t g">.pytest_cache</span></div>
<div class="r" style="top:142px"><b class="cv">›</b><u class="a ic fo"></u><span class="t">prompts</span></div>
<div class="r" style="top:155px"><u class="a ic ev"></u><span class="t g">.env</span></div>
<div class="r" style="top:167px"><u class="a ic ev"></u><span class="t">.env.example</span></div>
<div class="r" style="top:179px"><u class="a ic py"></u><span class="t">config.py</span></div>
<div class="r" style="top:192px"><u class="a ic py"></u><span class="t">graph_simple.py</span></div>
<div class="r" style="top:204px"><i class="a ic jn">{}</i><span class="t">langgraph.json</span></div>
<div class="r sel" style="top:216px"><u class="a ic py"></u><span class="t">nodes.py</span></div>
<div class="r" style="top:229px"><i class="a ic" style="font-size:5px;color:#6aa0d8;top:0;font-style:normal">PIP</i><span class="t">requirements.txt</span></div>
<div class="r" style="top:241px"><i class="a ic jn">{}</i><span class="t">sample_input.json</span></div>
<div class="r" style="top:254px"><i class="a ic jn">{}</i><span class="t">sample_resume.json</span></div>
<div class="r" style="top:266px"><u class="a ic py"></u><span class="t">state.py</span></div>
<div class="a" style="left:0;top:278px;width:120px;height:1px;background:#2b2b2b"></div>
<div class="r" style="top:279px;font-weight:bold;font-size:6px"><b class="cv" style="left:5px">›</b><span style="position:absolute;left:11px">OUTLINE</span></div>
<div class="r" style="top:292px;font-weight:bold;font-size:6px"><b class="cv" style="left:5px">›</b><span style="position:absolute;left:11px">TIMELINE</span></div>
</div>
<div class="tabs">
<div class="tab" style="left:0;width:86px"><u class="py" style="left:10px"></u><span class="a" style="left:18px">graph_simple.py</span></div>
<div class="tab on" style="left:86px;width:68px"><u class="py" style="left:10px"></u><span class="a" style="left:18px">nodes.py</span><span class="a" style="left:57px">✕</span></div>
<div class="tab" style="left:154px;width:66px"><u class="py" style="left:9px"></u><span class="a" style="left:18px;font-style:italic">config.py</span></div>
<span class="a" style="left:400px;top:5px;font-size:8px">▷˅</span><span class="a" style="left:420px;top:5px;font-size:8px">◫</span><span class="a" style="left:435px;top:4px;font-size:8px">···</span>
</div>
<div class="bc">reflection › <u class="py" style="display:inline-block;vertical-align:middle"></u> nodes.py › <span style="color:#b180d7">ⓒ</span> reviewer_node</div>
<div class="ed"><div class="in" style="top:-10.7px">
<div class="l"><i>167</i>        )</div>
<div class="l"><i>168</i>    <span class="y">)</span></div>
<div class="l"><i>169</i>    messages.<span class="f">append</span>(<span class="t2">HumanMessage</span>(content=review_content))</div>
<div class="l"><i>170</i></div>
<div class="l"><i>171</i>    <span class="m"># Get reviewer feedback</span></div>
<div class="l"><i>172</i>    <span class="m"># Initialize the LLM</span></div>
<div class="l"><i>173</i>    llm = <span class="t2">ChatOpenAI</span><span class="y">(</span></div>
<div class="l"><i>174</i>        model=<span class="n">DEFAULT_MODEL</span>,</div>
<div class="l"><i>175</i>        temperature=<span class="n">DEFAULT_TEMPERATURE</span></div>
<div class="l"><i>176</i>    <span class="y">)</span></div>
<div class="l"><i>177</i></div>
<div class="l"><i>178</i>    response = llm.<span class="f">invoke</span><span class="y">(</span></div>
<div class="l"><i>179</i>        messages</div>
<div class="l"><i>180</i>    <span class="y">)</span></div>
<div class="l"><i>181</i></div>
<div class="l"><i>182</i>    feedback_text = response.content</div>
<div class="l"><i>183</i>    <span class="m"># Extract decision using structured output</span></div>
<div class="l"><i>184</i>    decision_prompt = <span class="y">(</span></div>
<div class="l"><i>185</i>        <span class="s">"Based on the given feedback provided by the agent, identify if "</span></div>
<div class="l"><i>186</i>        <span class="s">"the agent suggests revision or approves the content as is. "</span></div>
<div class="l"><i>187</i>        <span class="k">f</span><span class="s">"Here is the feedback: \n</span><span class="y">{</span>feedback_text<span class="y">}</span><span class="s">\n\n"</span></div>
<div class="l"><i>188</i>    <span class="y">)</span></div>
<div class="l"><i>189</i>    reviewer_response = llm.<span class="f">with_structured_output</span><span class="y">(</span></div>
<div class="l"><i>190</i>        <span class="t2">AIReviewerResponse</span></div>
<div class="l"><i>191</i>    <span class="y">)</span>.<span class="f">invoke</span>(decision_prompt)</div>
<div class="l"><i>192</i>    decision = reviewer_response.<span class="f">get</span>(<span class="s">"decision"</span>, <span class="t2">Decision</span>.<span class="n">REVISE</span>.value)</div>
</div></div>
<div class="sk"><div class="l"><i>118</i><span class="k">def</span> <span class="f">reviewer_node</span>(state: <span class="t2">MessageResponseState</span>) -&gt; <span class="t2">MessageResponseState</span>:</div></div>
<div class="mm"></div><div class="vs" style="top:225px"></div><div class="hs"></div><div class="fb"></div>
<div class="st"><span class="a" style="left:7px">⤭</span><span class="a" style="left:24px">⑂ master ⟳</span><span class="a" style="left:78px">⊗ 0 ⚠ 0</span><span class="a" style="left:204px">⚲ msajid (1 week ago)</span><span class="a" style="left:283px">⌕</span><span class="a" style="left:298px">Ln 135, Col 34</span><span class="a" style="left:350px">Spaces: 4</span><span class="a" style="left:386px">UTF-8</span><span class="a" style="left:413px">CRLF</span><span class="a" style="left:437px">{} Python</span><span class="a" style="left:482px">⚇</span><span class="a" style="left:497px">3.13.3 (venv)</span><span class="a" style="left:545px">⊘ Prettier</span><span class="a" style="left:589px">♫</span></div>
</div>

<!-- ============ PANEL 9 ============ -->
<div class="p" style="left:1200px;top:674px">
<div class="tb">
<svg class="a" style="left:5px;top:4px" width="11" height="11" viewBox="0 0 11 11"><path d="M8 0.5L3.5 5 1.5 3.3 0.5 4 2.8 5.5 0.5 7 1.5 7.7 3.5 6 8 10.5 10.5 9.5V1.5z" fill="#2f9ee8"/></svg>
<span class="mn" style="left:29px">File</span><span class="mn" style="left:49px">Edit</span><span class="mn" style="left:65px">Selection</span><span class="mn" style="left:104px">View</span><span class="mn" style="left:131px">···</span>
<span class="mn" style="left:160px">←</span><span class="mn" style="left:175px">→</span>
<div class="srch">⌕ adv-lg-tech [Administrator]</div>
<span class="mn" style="left:425px">⟳ ˅</span>
<svg class="a" style="left:477px;top:5px" width="60" height="10" fill="none" stroke="#ccc" stroke-width=".9"><rect x="1" y="1" width="7" height="7"/><rect x="16" y="1" width="7" height="7"/><rect x="16" y="1" width="3" height="7" fill="#ccc"/><rect x="31" y="1" width="7" height="7"/><path d="M31 5.5h7"/><rect x="46" y="1" width="7" height="7"/><path d="M49.5 1v7"/></svg>
<span class="mn" style="left:545px">–</span><span class="mn" style="left:566px">❐</span><span class="mn" style="left:587px">✕</span>
</div>
<div class="ab"><svg width="26" height="302" fill="none" stroke="#858585" stroke-width="1"><rect x="0" y="3" width="1.5" height="20" fill="#0078d4" stroke="none"/><path d="M9 8h5l3 3v9h-8z M11 6h5l3 3" stroke="#d7d7d7"/><circle cx="14" cy="39" r="4"/><path d="M11 42l-4 4"/><circle cx="10" cy="62" r="1.5"/><circle cx="10" cy="72" r="1.5"/><circle cx="16" cy="64" r="1.5"/><path d="M10 63.5v7M16 65.5c0 3-6 2-6 5"/><path d="M9 89l8 5-8 5z"/><rect x="7" y="115" width="11" height="9"/><circle cx="17" cy="124" r="2.5"/><path d="M7 143h5v5h-5zM7 148h5v5h-5zM12 148h5v5h-5zM13 141h5v5h-5z"/><path d="M10 168h5M11 168v5l-4 7h11l-4-7v-5"/><path d="M8 196l5-3 5 3v6l-5 3-5-3zM8 196l5 3 5-3M13 199v6"/><circle cx="13" cy="263" r="5"/><circle cx="13" cy="261" r="1.8"/><circle cx="13" cy="291" r="4.5" stroke-dasharray="2 1.5"/><circle cx="13" cy="291" r="1.8"/></svg></div>
<div class="sb">
<div class="r" style="top:3px;font-size:6px;color:#bbb"><span style="position:absolute;left:11px">EXPLORER</span><span style="position:absolute;left:106px">···</span></div>
<div class="r" style="top:19px;font-weight:bold;font-size:6.3px"><b class="cv" style="left:5px"><span class="dn">›</span></b><span style="position:absolute;left:11px">ADV-LG-TECH</span></div>
<div class="r z" style="top:32px"><b class="cv"><span class="dn">›</span></b><u class="a ic fv"></u><span class="t g">.venv</span></div>
<div class="r" style="top:43px"><b class="cv">›</b><u class="a ic fo" style="background:#7d8a99"></u><span class="t g">Scripts</span></div>
<div class="r" style="top:55px"><b class="cv">›</b><u class="a ic fs"></u><span class="t g">share</span></div>
<div class="r" style="top:68px"><b class="a ic" style="color:#e05a45;font-size:6px;top:0">◆</b><span class="t g">.gitignore</span></div>
<div class="r" style="top:81px"><b class="a ic" style="color:#aaa;font-size:7px;top:0">⚙</b><span class="t g">pyvenv.cfg</span></div>
<div class="r z" style="top:93px"><b class="cv"><span class="dn">›</span></b><u class="a ic fo"></u><span class="t">reflection</span></div>
<div class="r" style="top:105px"><b class="cv">›</b><u class="a ic fv"></u><span class="t g">__pycache__</span></div>
<div class="r" style="top:117px"><b class="cv">›</b><u class="a ic fo"></u><span class="t">langgraph_api</span></div>
<div class="r" style="top:130px"><b class="cv">›</b><u class="a ic fo" style="background:#5c8aa6"></u><span class="t g">.pytest_cache</span></div>
<div class="r" style="top:142px"><b class="cv">›</b><u class="a ic fo"></u><span class="t">prompts</span></div>
<div class="r" style="top:155px"><u class="a ic ev"></u><span class="t g">.env</span></div>
<div class="r" style="top:167px"><u class="a ic ev"></u><span class="t">.env.example</span></div>
<div class="r" style="top:179px"><u class="a ic py"></u><span class="t">config.py</span></div>
<div class="r" style="top:192px"><u class="a ic py"></u><span class="t">graph_simple.py</span></div>
<div class="r" style="top:204px"><i class="a ic jn">{}</i><span class="t">langgraph.json</span></div>
<div class="r sel" style="top:216px"><u class="a ic py"></u><span class="t">nodes.py</span></div>
<div class="r" style="top:229px"><i class="a ic" style="font-size:5px;color:#6aa0d8;top:0;font-style:normal">PIP</i><span class="t">requirements.txt</span></div>
<div class="r" style="top:241px"><i class="a ic jn">{}</i><span class="t">sample_input.json</span></div>
<div class="r" style="top:254px"><i class="a ic jn">{}</i><span class="t">sample_resume.json</span></div>
<div class="r" style="top:266px"><u class="a ic py"></u><span class="t">state.py</span></div>
<div class="a" style="left:0;top:278px;width:120px;height:1px;background:#2b2b2b"></div>
<div class="r" style="top:279px;font-weight:bold;font-size:6px"><b class="cv" style="left:5px">›</b><span style="position:absolute;left:11px">OUTLINE</span></div>
<div class="r" style="top:292px;font-weight:bold;font-size:6px"><b class="cv" style="left:5px">›</b><span style="position:absolute;left:11px">TIMELINE</span></div>
</div>
<div class="tabs">
<div class="tab" style="left:0;width:86px"><u class="py" style="left:10px"></u><span class="a" style="left:18px">graph_simple.py</span></div>
<div class="tab on" style="left:86px;width:68px"><u class="py" style="left:10px"></u><span class="a" style="left:18px">nodes.py</span><span class="a" style="left:57px">✕</span></div>
<div class="tab" style="left:154px;width:66px"><u class="py" style="left:9px"></u><span class="a" style="left:18px;font-style:italic">state.py</span></div>
<span class="a" style="left:400px;top:5px;font-size:8px">▷˅</span><span class="a" style="left:420px;top:5px;font-size:8px">◫</span><span class="a" style="left:435px;top:4px;font-size:8px">···</span>
</div>
<div class="bc">reflection › <u class="py" style="display:inline-block;vertical-align:middle"></u> nodes.py › <span style="color:#b180d7">ⓒ</span> reviewer_node</div>
<div class="ed"><div class="in" style="top:-0.3px">
<div class="l"><i>179</i>        messages</div>
<div class="l"><i>180</i>    <span class="y">)</span></div>
<div class="l"><i>181</i></div>
<div class="l"><i>182</i>    feedback_text = response.content</div>
<div class="l"><i>183</i>    <span class="m"># Extract decision using structured output</span></div>
<div class="l"><i>184</i>    decision_prompt = <span class="y">(</span></div>
<div class="l"><i>185</i>        <span class="s">"Based on the given feedback provided by the agent, identify if "</span></div>
<div class="l"><i>186</i>        <span class="s">"the agent suggests revision or approves the content as is. "</span></div>
<div class="l"><i>187</i>        <span class="k">f</span><span class="s">"Here is the feedback: \n</span><span class="y">{</span>feedback_text<span class="y">}</span><span class="s">\n\n"</span></div>
<div class="l"><i>188</i>    <span class="y">)</span></div>
<div class="l"><i>189</i>    reviewer_response = llm.<span class="f">with_structured_output</span><span class="y">(</span></div>
<div class="l"><i class="cur">190</i>        <span class="t2" style="background:#3a4a4a">AIReviewerResponse</span></div>
<div class="l"><i>191</i>    <span class="y">)</span>.<span class="f">invoke</span>(decision_prompt)</div>
<div class="l"><i>192</i>    decision = reviewer_response.<span class="f">get</span>(<span class="s">"decision"</span>, <span class="t2">Decision</span>.<span class="n">REVISE</span>.value)</div>
<div class="l"><i>193</i></div>
<div class="l"><i>194</i>    <span class="m"># Determine if another revision is needed</span></div>
<div class="l"><i>195</i>    continue_revision = <span class="y">(</span></div>
<div class="l"><i>196</i>        decision == <span class="t2">Decision</span>.<span class="n">REVISE</span>.value <span class="k">and</span></div>
<div class="l"><i>197</i>        revision_count &lt; <span class="n">MAX_REVISIONS</span></div>
<div class="l"><i>198</i>    <span class="y">)</span></div>
<div class="l"><i>199</i></div>
<div class="l"><i>200</i>    <span class="c">return</span> <span class="y">{</span></div>
<div class="l"><i>201</i>        **state,</div>
<div class="l"><i>202</i>        <span class="s">"latest_feedback_for_writer"</span>: feedback_text,</div>
<div class="l"><i>203</i>        <span class="s">"latest_reviewer_decision"</span>: decision,</div>
</div></div>
<div class="sk"><div class="l"><i>118</i><span class="k">def</span> <span class="f">reviewer_node</span>(state: <span class="t2">MessageResponseState</span>) -&gt; <span class="t2">MessageResponseState</span>:</div></div>
<div class="a" style="left:194px;top:220px;width:226px;height:64px;border:1.5px solid #e0e0e0;border-radius:3px"></div>
<div class="mm"></div><div class="vs" style="top:235px"></div><div class="fb"></div>
<div class="st"><span class="a" style="left:7px">⤭</span><span class="a" style="left:24px">⑂ master ⟳</span><span class="a" style="left:78px">⊗ 0 ⚠ 0</span><span class="a" style="left:204px">⚲ msajid (1 week ago)</span><span class="a" style="left:283px">⌕</span><span class="a" style="left:298px">Ln 190, Col 20</span><span class="a" style="left:350px">Spaces: 4</span><span class="a" style="left:386px">UTF-8</span><span class="a" style="left:413px">CRLF</span><span class="a" style="left:437px">{} Python</span><span class="a" style="left:482px">⚇</span><span class="a" style="left:497px">3.13.3 (venv)</span><span class="a" style="left:545px">⊘ Prettier</span><span class="a" style="left:589px">♫</span></div>
</div>

</body></html>
